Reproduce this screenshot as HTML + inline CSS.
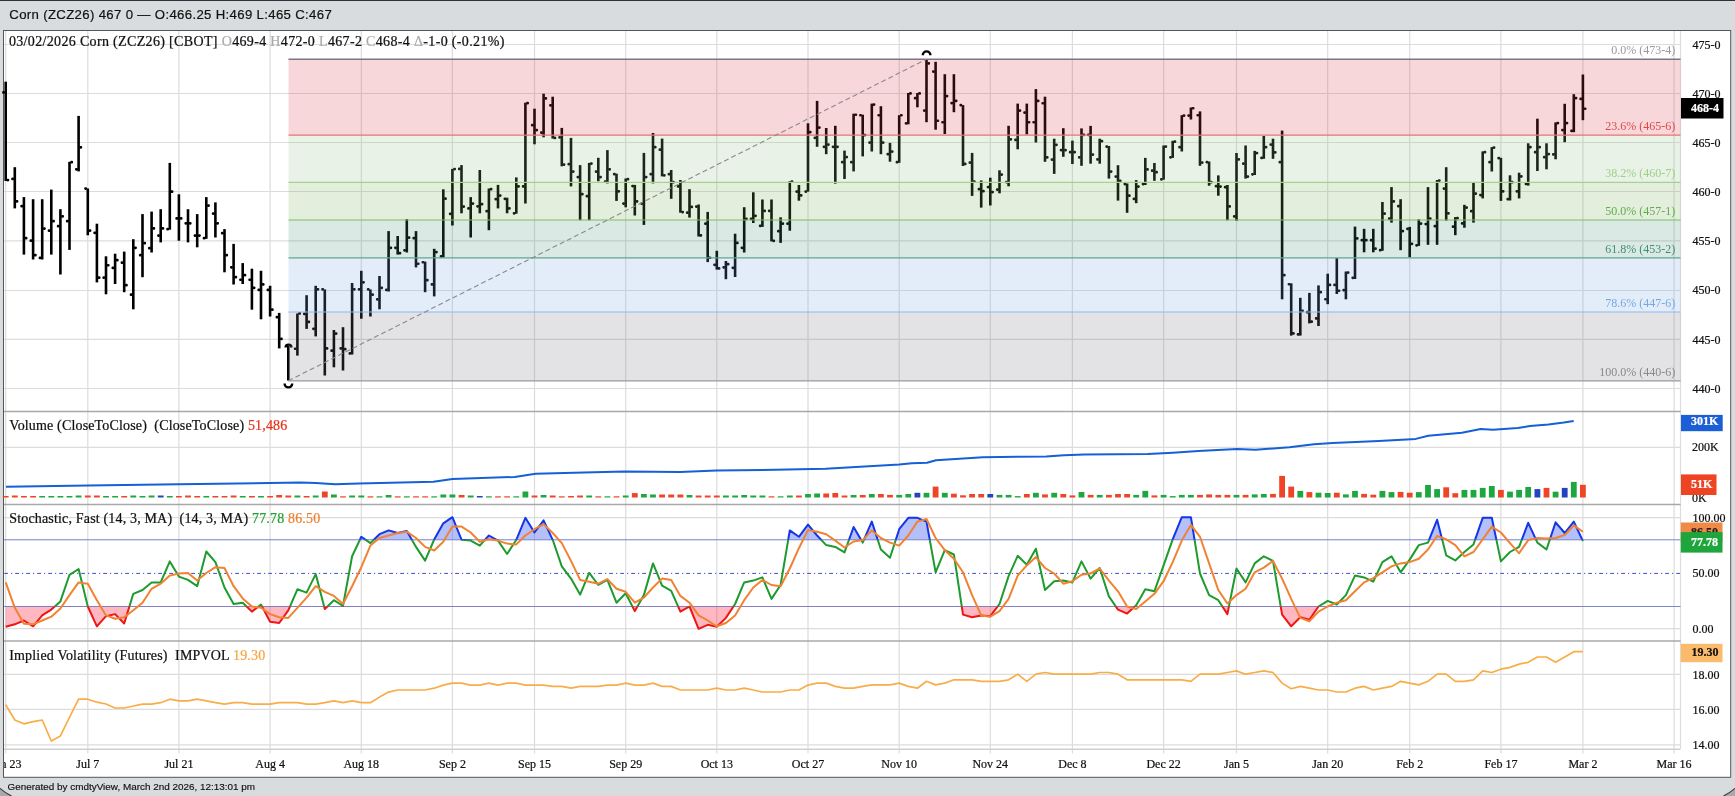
<!DOCTYPE html><html><head><meta charset="utf-8"><style>
html,body{margin:0;padding:0;background:#d9dcdf;}
svg{display:block;will-change:transform;}
.sans{font-family:"Liberation Sans",sans-serif;}
.serif{font-family:"Liberation Serif",serif;}
</style></head><body>
<svg width="1735" height="796" viewBox="0 0 1735 796">
<defs>
<clipPath id="plot"><rect x="4" y="31" width="1676.5" height="718"/></clipPath>
<clipPath id="kup"><rect x="0" y="504" width="1681" height="35.8"/></clipPath>
<clipPath id="kdn"><rect x="0" y="606.5" width="1681" height="35"/></clipPath>
<clipPath id="kmid"><rect x="0" y="539.8" width="1681" height="66.7"/></clipPath>
<clipPath id="frame"><rect x="4" y="31" width="1726.5" height="746"/></clipPath>
</defs>
<rect x="0" y="0" width="1735" height="796" fill="#d9dcdf"/>
<rect x="0" y="0" width="1735" height="1" fill="#2e3238"/>
<text x="9.3" y="18.6" class="sans" font-size="13.2" fill="#111" stroke="#111" stroke-width="0.2" textLength="322.5" lengthAdjust="spacing">Corn (ZCZ26) 467 0 — O:466.25 H:469 L:465 C:467</text>
<rect x="3.5" y="30.5" width="1727.2" height="746.8" fill="#fff" stroke="#555" stroke-width="1"/>
<g stroke="#dcdcdc" stroke-width="1.2">
<line x1="5.7" y1="31" x2="5.7" y2="753.6"/>
<line x1="87.8" y1="31" x2="87.8" y2="753.6"/>
<line x1="178.9" y1="31" x2="178.9" y2="753.6"/>
<line x1="270.1" y1="31" x2="270.1" y2="753.6"/>
<line x1="361.3" y1="31" x2="361.3" y2="753.6"/>
<line x1="452.4" y1="31" x2="452.4" y2="753.6"/>
<line x1="534.5" y1="31" x2="534.5" y2="753.6"/>
<line x1="625.7" y1="31" x2="625.7" y2="753.6"/>
<line x1="716.8" y1="31" x2="716.8" y2="753.6"/>
<line x1="808" y1="31" x2="808" y2="753.6"/>
<line x1="899.2" y1="31" x2="899.2" y2="753.6"/>
<line x1="990.3" y1="31" x2="990.3" y2="753.6"/>
<line x1="1072.4" y1="31" x2="1072.4" y2="753.6"/>
<line x1="1163.6" y1="31" x2="1163.6" y2="753.6"/>
<line x1="1236.5" y1="31" x2="1236.5" y2="753.6"/>
<line x1="1327.7" y1="31" x2="1327.7" y2="753.6"/>
<line x1="1409.7" y1="31" x2="1409.7" y2="753.6"/>
<line x1="1500.9" y1="31" x2="1500.9" y2="753.6"/>
<line x1="1582.9" y1="31" x2="1582.9" y2="753.6"/>
<line x1="1674.1" y1="31" x2="1674.1" y2="753.6"/>
<line x1="1680.5" y1="31" x2="1680.5" y2="749"/>
<line x1="4" y1="44.5" x2="1680.5" y2="44.5"/>
<line x1="4" y1="93.5" x2="1680.5" y2="93.5"/>
<line x1="4" y1="142.5" x2="1680.5" y2="142.5"/>
<line x1="4" y1="191.5" x2="1680.5" y2="191.5"/>
<line x1="4" y1="240.8" x2="1680.5" y2="240.8"/>
<line x1="4" y1="290.5" x2="1680.5" y2="290.5"/>
<line x1="4" y1="339.3" x2="1680.5" y2="339.3"/>
<line x1="4" y1="388.5" x2="1680.5" y2="388.5"/>
<line x1="4" y1="447.3" x2="1680.5" y2="447.3"/>
<line x1="4" y1="517.6" x2="1680.5" y2="517.6"/>
<line x1="4" y1="628.6" x2="1680.5" y2="628.6"/>
<line x1="4" y1="674.4" x2="1680.5" y2="674.4"/>
<line x1="4" y1="709.4" x2="1680.5" y2="709.4"/>
<line x1="4" y1="744.8" x2="1680.5" y2="744.8"/>
</g>
<g stroke="#a8a8a8" stroke-width="1.5">
<line x1="4" y1="411.4" x2="1680.5" y2="411.4"/>
<line x1="4" y1="504.4" x2="1680.5" y2="504.4"/>
<line x1="4" y1="641.0" x2="1680.5" y2="641.0"/>
</g>
<line x1="4" y1="749.2" x2="1680.5" y2="749.2" stroke="#cfcfcf" stroke-width="1.5"/>
<g fill="#000">
<rect x="4.4" y="81.7" width="2.6" height="99.3"/>
<rect x="2.1" y="91.1" width="2.9" height="2.7" rx="1.1"/>
<rect x="6.4" y="178.7" width="2.9" height="2.7" rx="1.1"/>
<rect x="13.5" y="167.2" width="2.6" height="41.2"/>
<rect x="11.2" y="177.6" width="2.9" height="2.7" rx="1.1"/>
<rect x="15.5" y="200" width="2.9" height="2.7" rx="1.1"/>
<rect x="22.6" y="197.1" width="2.6" height="57.5"/>
<rect x="20.3" y="204.8" width="2.9" height="2.7" rx="1.1"/>
<rect x="24.6" y="236.8" width="2.9" height="2.7" rx="1.1"/>
<rect x="31.8" y="199.2" width="2.6" height="60.3"/>
<rect x="29.5" y="239.3" width="2.9" height="2.7" rx="1.1"/>
<rect x="33.8" y="253.8" width="2.9" height="2.7" rx="1.1"/>
<rect x="40.9" y="199.2" width="2.6" height="60.3"/>
<rect x="38.6" y="256.6" width="2.9" height="2.7" rx="1.1"/>
<rect x="42.9" y="227.2" width="2.9" height="2.7" rx="1.1"/>
<rect x="50" y="189.6" width="2.6" height="65"/>
<rect x="47.7" y="229.3" width="2.9" height="2.7" rx="1.1"/>
<rect x="52" y="219.8" width="2.9" height="2.7" rx="1.1"/>
<rect x="59.1" y="209.2" width="2.6" height="65.3"/>
<rect x="56.8" y="224.8" width="2.9" height="2.7" rx="1.1"/>
<rect x="61.1" y="215" width="2.9" height="2.7" rx="1.1"/>
<rect x="68.2" y="161.8" width="2.6" height="88.1"/>
<rect x="65.9" y="219.8" width="2.9" height="2.7" rx="1.1"/>
<rect x="70.2" y="160.8" width="2.9" height="2.7" rx="1.1"/>
<rect x="77.3" y="115.9" width="2.6" height="55.5"/>
<rect x="75" y="168" width="2.9" height="2.7" rx="1.1"/>
<rect x="79.3" y="146" width="2.9" height="2.7" rx="1.1"/>
<rect x="86.5" y="188.5" width="2.6" height="46.8"/>
<rect x="84.2" y="187.2" width="2.9" height="2.7" rx="1.1"/>
<rect x="88.5" y="229.2" width="2.9" height="2.7" rx="1.1"/>
<rect x="95.6" y="223.7" width="2.6" height="58.7"/>
<rect x="93.3" y="231.5" width="2.9" height="2.7" rx="1.1"/>
<rect x="97.6" y="276.3" width="2.9" height="2.7" rx="1.1"/>
<rect x="104.7" y="256.3" width="2.6" height="38"/>
<rect x="102.4" y="276.3" width="2.9" height="2.7" rx="1.1"/>
<rect x="106.7" y="263.9" width="2.9" height="2.7" rx="1.1"/>
<rect x="113.8" y="253.7" width="2.6" height="30.3"/>
<rect x="111.5" y="266.6" width="2.9" height="2.7" rx="1.1"/>
<rect x="115.8" y="258.8" width="2.9" height="2.7" rx="1.1"/>
<rect x="122.9" y="251.6" width="2.6" height="40.6"/>
<rect x="120.6" y="261.3" width="2.9" height="2.7" rx="1.1"/>
<rect x="124.9" y="283.8" width="2.9" height="2.7" rx="1.1"/>
<rect x="132" y="239.2" width="2.6" height="70.1"/>
<rect x="129.7" y="293.3" width="2.9" height="2.7" rx="1.1"/>
<rect x="134" y="246.5" width="2.9" height="2.7" rx="1.1"/>
<rect x="141.2" y="214.1" width="2.6" height="63.1"/>
<rect x="138.9" y="253.8" width="2.9" height="2.7" rx="1.1"/>
<rect x="143.2" y="241.8" width="2.9" height="2.7" rx="1.1"/>
<rect x="150.3" y="211.6" width="2.6" height="40.9"/>
<rect x="148" y="246.8" width="2.9" height="2.7" rx="1.1"/>
<rect x="152.3" y="227.1" width="2.9" height="2.7" rx="1.1"/>
<rect x="159.4" y="209.2" width="2.6" height="33.2"/>
<rect x="157.1" y="234.2" width="2.9" height="2.7" rx="1.1"/>
<rect x="161.4" y="227.1" width="2.9" height="2.7" rx="1.1"/>
<rect x="168.5" y="162.9" width="2.6" height="66.8"/>
<rect x="166.2" y="227.8" width="2.9" height="2.7" rx="1.1"/>
<rect x="170.5" y="190.3" width="2.9" height="2.7" rx="1.1"/>
<rect x="177.6" y="194.3" width="2.6" height="46.4"/>
<rect x="175.3" y="217.1" width="2.9" height="2.7" rx="1.1"/>
<rect x="179.6" y="217.1" width="2.9" height="2.7" rx="1.1"/>
<rect x="186.7" y="209.2" width="2.6" height="33.2"/>
<rect x="184.4" y="222" width="2.9" height="2.7" rx="1.1"/>
<rect x="188.7" y="222" width="2.9" height="2.7" rx="1.1"/>
<rect x="195.9" y="214.1" width="2.6" height="33.2"/>
<rect x="193.6" y="234.2" width="2.9" height="2.7" rx="1.1"/>
<rect x="197.9" y="234.2" width="2.9" height="2.7" rx="1.1"/>
<rect x="205" y="197.1" width="2.6" height="41.7"/>
<rect x="202.7" y="236.8" width="2.9" height="2.7" rx="1.1"/>
<rect x="207" y="204.2" width="2.9" height="2.7" rx="1.1"/>
<rect x="214.1" y="202.4" width="2.6" height="35.1"/>
<rect x="211.8" y="212.2" width="2.9" height="2.7" rx="1.1"/>
<rect x="216.1" y="222" width="2.9" height="2.7" rx="1.1"/>
<rect x="223.2" y="229.1" width="2.6" height="43.2"/>
<rect x="220.9" y="231.8" width="2.9" height="2.7" rx="1.1"/>
<rect x="225.2" y="253.8" width="2.9" height="2.7" rx="1.1"/>
<rect x="232.3" y="243.9" width="2.6" height="40.6"/>
<rect x="230" y="266" width="2.9" height="2.7" rx="1.1"/>
<rect x="234.3" y="275.8" width="2.9" height="2.7" rx="1.1"/>
<rect x="241.4" y="263.1" width="2.6" height="20.9"/>
<rect x="239.1" y="278.4" width="2.9" height="2.7" rx="1.1"/>
<rect x="243.4" y="273.8" width="2.9" height="2.7" rx="1.1"/>
<rect x="250.6" y="268.7" width="2.6" height="41"/>
<rect x="248.3" y="278.4" width="2.9" height="2.7" rx="1.1"/>
<rect x="252.6" y="286.5" width="2.9" height="2.7" rx="1.1"/>
<rect x="259.7" y="270.8" width="2.6" height="48.5"/>
<rect x="257.4" y="288.6" width="2.9" height="2.7" rx="1.1"/>
<rect x="261.7" y="283.1" width="2.9" height="2.7" rx="1.1"/>
<rect x="268.8" y="285.8" width="2.6" height="30.7"/>
<rect x="266.5" y="288.6" width="2.9" height="2.7" rx="1.1"/>
<rect x="270.8" y="308.3" width="2.9" height="2.7" rx="1.1"/>
<rect x="277.9" y="312.9" width="2.6" height="35.5"/>
<rect x="275.6" y="315.8" width="2.9" height="2.7" rx="1.1"/>
<rect x="279.9" y="337.6" width="2.9" height="2.7" rx="1.1"/>
<rect x="287" y="346" width="2.6" height="34.5"/>
<rect x="296.1" y="313.5" width="2.6" height="42.1"/>
<rect x="293.8" y="347.4" width="2.9" height="2.7" rx="1.1"/>
<rect x="298.1" y="312.1" width="2.9" height="2.7" rx="1.1"/>
<rect x="305.3" y="295.2" width="2.6" height="33.7"/>
<rect x="303" y="312.6" width="2.9" height="2.7" rx="1.1"/>
<rect x="307.3" y="320.6" width="2.9" height="2.7" rx="1.1"/>
<rect x="314.4" y="285.8" width="2.6" height="50.6"/>
<rect x="312.1" y="327.5" width="2.9" height="2.7" rx="1.1"/>
<rect x="316.4" y="288" width="2.9" height="2.7" rx="1.1"/>
<rect x="323.5" y="289.4" width="2.6" height="86.1"/>
<rect x="321.2" y="288" width="2.9" height="2.7" rx="1.1"/>
<rect x="325.5" y="347.1" width="2.9" height="2.7" rx="1.1"/>
<rect x="332.6" y="330" width="2.6" height="37.3"/>
<rect x="330.3" y="349.3" width="2.9" height="2.7" rx="1.1"/>
<rect x="334.6" y="332.2" width="2.9" height="2.7" rx="1.1"/>
<rect x="341.7" y="327.2" width="2.6" height="43.3"/>
<rect x="339.4" y="347.1" width="2.9" height="2.7" rx="1.1"/>
<rect x="343.7" y="347.8" width="2.9" height="2.7" rx="1.1"/>
<rect x="350.8" y="283" width="2.6" height="71.5"/>
<rect x="348.5" y="352.1" width="2.9" height="2.7" rx="1.1"/>
<rect x="352.8" y="288" width="2.9" height="2.7" rx="1.1"/>
<rect x="360" y="270.8" width="2.6" height="47.9"/>
<rect x="357.7" y="288" width="2.9" height="2.7" rx="1.1"/>
<rect x="362" y="281" width="2.9" height="2.7" rx="1.1"/>
<rect x="369.1" y="289.4" width="2.6" height="27.1"/>
<rect x="366.8" y="288" width="2.9" height="2.7" rx="1.1"/>
<rect x="371.1" y="293.3" width="2.9" height="2.7" rx="1.1"/>
<rect x="378.2" y="276" width="2.6" height="33.3"/>
<rect x="375.9" y="298" width="2.9" height="2.7" rx="1.1"/>
<rect x="380.2" y="286.5" width="2.9" height="2.7" rx="1.1"/>
<rect x="387.3" y="231.1" width="2.6" height="60.4"/>
<rect x="385" y="288.6" width="2.9" height="2.7" rx="1.1"/>
<rect x="389.3" y="246.5" width="2.9" height="2.7" rx="1.1"/>
<rect x="396.4" y="236" width="2.6" height="18.6"/>
<rect x="394.1" y="246.5" width="2.9" height="2.7" rx="1.1"/>
<rect x="398.4" y="251.8" width="2.9" height="2.7" rx="1.1"/>
<rect x="405.5" y="219.1" width="2.6" height="33.4"/>
<rect x="403.2" y="249" width="2.9" height="2.7" rx="1.1"/>
<rect x="407.5" y="236.2" width="2.9" height="2.7" rx="1.1"/>
<rect x="414.7" y="231.1" width="2.6" height="36.3"/>
<rect x="412.4" y="236.8" width="2.9" height="2.7" rx="1.1"/>
<rect x="416.7" y="262.4" width="2.9" height="2.7" rx="1.1"/>
<rect x="423.8" y="261.6" width="2.6" height="30.6"/>
<rect x="421.5" y="260.9" width="2.9" height="2.7" rx="1.1"/>
<rect x="425.8" y="278.8" width="2.9" height="2.7" rx="1.1"/>
<rect x="432.9" y="248.8" width="2.6" height="47.6"/>
<rect x="430.6" y="283.1" width="2.9" height="2.7" rx="1.1"/>
<rect x="434.9" y="250.7" width="2.9" height="2.7" rx="1.1"/>
<rect x="442" y="189.3" width="2.6" height="68.1"/>
<rect x="439.7" y="255" width="2.9" height="2.7" rx="1.1"/>
<rect x="444" y="197.3" width="2.9" height="2.7" rx="1.1"/>
<rect x="451.1" y="168.9" width="2.6" height="56.6"/>
<rect x="448.8" y="212.5" width="2.9" height="2.7" rx="1.1"/>
<rect x="453.1" y="167.7" width="2.9" height="2.7" rx="1.1"/>
<rect x="460.2" y="165.1" width="2.6" height="48.2"/>
<rect x="457.9" y="167.6" width="2.9" height="2.7" rx="1.1"/>
<rect x="462.2" y="205.2" width="2.9" height="2.7" rx="1.1"/>
<rect x="469.4" y="197.1" width="2.6" height="40.4"/>
<rect x="467.1" y="207.1" width="2.9" height="2.7" rx="1.1"/>
<rect x="471.4" y="202.2" width="2.9" height="2.7" rx="1.1"/>
<rect x="478.5" y="170" width="2.6" height="43.3"/>
<rect x="476.2" y="205" width="2.9" height="2.7" rx="1.1"/>
<rect x="480.5" y="202.8" width="2.9" height="2.7" rx="1.1"/>
<rect x="487.6" y="188.5" width="2.6" height="41.7"/>
<rect x="485.3" y="209.8" width="2.9" height="2.7" rx="1.1"/>
<rect x="489.6" y="187.8" width="2.9" height="2.7" rx="1.1"/>
<rect x="496.7" y="184.9" width="2.6" height="23.5"/>
<rect x="494.4" y="197.8" width="2.9" height="2.7" rx="1.1"/>
<rect x="498.7" y="194.2" width="2.9" height="2.7" rx="1.1"/>
<rect x="505.8" y="197.7" width="2.6" height="15.6"/>
<rect x="503.5" y="197.5" width="2.9" height="2.7" rx="1.1"/>
<rect x="507.8" y="207.1" width="2.9" height="2.7" rx="1.1"/>
<rect x="515" y="177.4" width="2.6" height="36.3"/>
<rect x="512.7" y="212" width="2.9" height="2.7" rx="1.1"/>
<rect x="517" y="185.1" width="2.9" height="2.7" rx="1.1"/>
<rect x="524.1" y="102.7" width="2.6" height="100.8"/>
<rect x="521.8" y="185.1" width="2.9" height="2.7" rx="1.1"/>
<rect x="526.1" y="101.8" width="2.9" height="2.7" rx="1.1"/>
<rect x="533.2" y="108.7" width="2.6" height="35.6"/>
<rect x="530.9" y="123.8" width="2.9" height="2.7" rx="1.1"/>
<rect x="535.2" y="128.7" width="2.9" height="2.7" rx="1.1"/>
<rect x="542.3" y="93.7" width="2.6" height="43.6"/>
<rect x="540" y="131.2" width="2.9" height="2.7" rx="1.1"/>
<rect x="544.3" y="97.1" width="2.9" height="2.7" rx="1.1"/>
<rect x="551.4" y="96.7" width="2.6" height="41.9"/>
<rect x="549.1" y="104" width="2.9" height="2.7" rx="1.1"/>
<rect x="553.4" y="136.6" width="2.9" height="2.7" rx="1.1"/>
<rect x="560.5" y="127.9" width="2.6" height="38.4"/>
<rect x="558.2" y="136" width="2.9" height="2.7" rx="1.1"/>
<rect x="562.5" y="163.2" width="2.9" height="2.7" rx="1.1"/>
<rect x="569.7" y="137.9" width="2.6" height="48.5"/>
<rect x="567.4" y="162.8" width="2.9" height="2.7" rx="1.1"/>
<rect x="571.7" y="170.2" width="2.9" height="2.7" rx="1.1"/>
<rect x="578.8" y="165.1" width="2.6" height="55.1"/>
<rect x="576.5" y="175.7" width="2.9" height="2.7" rx="1.1"/>
<rect x="580.8" y="192.8" width="2.9" height="2.7" rx="1.1"/>
<rect x="587.9" y="162.9" width="2.6" height="57.3"/>
<rect x="585.6" y="194.8" width="2.9" height="2.7" rx="1.1"/>
<rect x="589.9" y="162.2" width="2.9" height="2.7" rx="1.1"/>
<rect x="597" y="157.8" width="2.6" height="23.5"/>
<rect x="594.7" y="170.2" width="2.9" height="2.7" rx="1.1"/>
<rect x="599" y="175.7" width="2.9" height="2.7" rx="1.1"/>
<rect x="606.1" y="150.1" width="2.6" height="33.3"/>
<rect x="603.8" y="180.3" width="2.9" height="2.7" rx="1.1"/>
<rect x="608.1" y="168" width="2.9" height="2.7" rx="1.1"/>
<rect x="615.2" y="173.6" width="2.6" height="27.3"/>
<rect x="612.9" y="172.8" width="2.9" height="2.7" rx="1.1"/>
<rect x="617.2" y="190" width="2.9" height="2.7" rx="1.1"/>
<rect x="624.4" y="178.5" width="2.6" height="28.8"/>
<rect x="622.1" y="202.2" width="2.9" height="2.7" rx="1.1"/>
<rect x="626.4" y="177.8" width="2.9" height="2.7" rx="1.1"/>
<rect x="633.5" y="184.9" width="2.6" height="30.6"/>
<rect x="631.2" y="184.7" width="2.9" height="2.7" rx="1.1"/>
<rect x="635.5" y="200.1" width="2.9" height="2.7" rx="1.1"/>
<rect x="642.6" y="152.9" width="2.6" height="72"/>
<rect x="640.3" y="202.2" width="2.9" height="2.7" rx="1.1"/>
<rect x="644.6" y="175.7" width="2.9" height="2.7" rx="1.1"/>
<rect x="651.7" y="133" width="2.6" height="50.4"/>
<rect x="649.4" y="172.8" width="2.9" height="2.7" rx="1.1"/>
<rect x="653.7" y="145.8" width="2.9" height="2.7" rx="1.1"/>
<rect x="660.8" y="138.6" width="2.6" height="37.8"/>
<rect x="658.5" y="148.3" width="2.9" height="2.7" rx="1.1"/>
<rect x="662.8" y="174" width="2.9" height="2.7" rx="1.1"/>
<rect x="669.9" y="170" width="2.6" height="28.8"/>
<rect x="667.6" y="172.8" width="2.9" height="2.7" rx="1.1"/>
<rect x="671.9" y="180.8" width="2.9" height="2.7" rx="1.1"/>
<rect x="679.1" y="180" width="2.6" height="32.7"/>
<rect x="676.8" y="185.1" width="2.9" height="2.7" rx="1.1"/>
<rect x="681.1" y="210.7" width="2.9" height="2.7" rx="1.1"/>
<rect x="688.2" y="189.2" width="2.6" height="28.4"/>
<rect x="685.9" y="211.3" width="2.9" height="2.7" rx="1.1"/>
<rect x="690.2" y="205.6" width="2.9" height="2.7" rx="1.1"/>
<rect x="697.3" y="204.5" width="2.6" height="32"/>
<rect x="695" y="205.2" width="2.9" height="2.7" rx="1.1"/>
<rect x="699.3" y="234.1" width="2.9" height="2.7" rx="1.1"/>
<rect x="706.4" y="211.9" width="2.6" height="50.2"/>
<rect x="704.1" y="222.3" width="2.9" height="2.7" rx="1.1"/>
<rect x="708.4" y="256.4" width="2.9" height="2.7" rx="1.1"/>
<rect x="715.5" y="250.8" width="2.6" height="18.8"/>
<rect x="713.2" y="263.5" width="2.9" height="2.7" rx="1.1"/>
<rect x="717.5" y="267.1" width="2.9" height="2.7" rx="1.1"/>
<rect x="724.6" y="261" width="2.6" height="18.2"/>
<rect x="722.3" y="266" width="2.9" height="2.7" rx="1.1"/>
<rect x="726.6" y="262.8" width="2.9" height="2.7" rx="1.1"/>
<rect x="733.8" y="233.7" width="2.6" height="43.3"/>
<rect x="731.5" y="266.5" width="2.9" height="2.7" rx="1.1"/>
<rect x="735.8" y="241.6" width="2.9" height="2.7" rx="1.1"/>
<rect x="742.9" y="207.2" width="2.6" height="45.3"/>
<rect x="740.6" y="246.5" width="2.9" height="2.7" rx="1.1"/>
<rect x="744.9" y="217.5" width="2.9" height="2.7" rx="1.1"/>
<rect x="752" y="192.3" width="2.6" height="30.7"/>
<rect x="749.7" y="217.5" width="2.9" height="2.7" rx="1.1"/>
<rect x="754" y="214.5" width="2.9" height="2.7" rx="1.1"/>
<rect x="761.1" y="199.5" width="2.6" height="27.4"/>
<rect x="758.8" y="224.5" width="2.9" height="2.7" rx="1.1"/>
<rect x="763.1" y="209.6" width="2.9" height="2.7" rx="1.1"/>
<rect x="770.2" y="199.5" width="2.6" height="41.9"/>
<rect x="767.9" y="209.6" width="2.9" height="2.7" rx="1.1"/>
<rect x="772.2" y="239.5" width="2.9" height="2.7" rx="1.1"/>
<rect x="779.3" y="217.3" width="2.6" height="25.6"/>
<rect x="777" y="229.8" width="2.9" height="2.7" rx="1.1"/>
<rect x="781.3" y="222.3" width="2.9" height="2.7" rx="1.1"/>
<rect x="788.5" y="181.2" width="2.6" height="49.5"/>
<rect x="786.2" y="222.3" width="2.9" height="2.7" rx="1.1"/>
<rect x="790.5" y="180.3" width="2.9" height="2.7" rx="1.1"/>
<rect x="797.6" y="185" width="2.6" height="15.7"/>
<rect x="795.3" y="190.2" width="2.9" height="2.7" rx="1.1"/>
<rect x="799.6" y="194.1" width="2.9" height="2.7" rx="1.1"/>
<rect x="806.7" y="123.3" width="2.6" height="68.3"/>
<rect x="804.4" y="190.2" width="2.9" height="2.7" rx="1.1"/>
<rect x="808.7" y="130.8" width="2.9" height="2.7" rx="1.1"/>
<rect x="815.8" y="100.9" width="2.6" height="45.9"/>
<rect x="813.5" y="136.5" width="2.9" height="2.7" rx="1.1"/>
<rect x="817.8" y="126.2" width="2.9" height="2.7" rx="1.1"/>
<rect x="824.9" y="128" width="2.6" height="26.2"/>
<rect x="822.6" y="145.5" width="2.9" height="2.7" rx="1.1"/>
<rect x="826.9" y="143.2" width="2.9" height="2.7" rx="1.1"/>
<rect x="834" y="125.8" width="2.6" height="57.8"/>
<rect x="831.7" y="145.5" width="2.9" height="2.7" rx="1.1"/>
<rect x="836" y="145.5" width="2.9" height="2.7" rx="1.1"/>
<rect x="843.2" y="150.6" width="2.6" height="28.4"/>
<rect x="840.9" y="160.8" width="2.9" height="2.7" rx="1.1"/>
<rect x="845.2" y="155.7" width="2.9" height="2.7" rx="1.1"/>
<rect x="852.3" y="113.7" width="2.6" height="57.7"/>
<rect x="850" y="160.8" width="2.9" height="2.7" rx="1.1"/>
<rect x="854.3" y="113.4" width="2.9" height="2.7" rx="1.1"/>
<rect x="861.4" y="114.7" width="2.6" height="41.7"/>
<rect x="859.1" y="113.9" width="2.9" height="2.7" rx="1.1"/>
<rect x="863.4" y="133.7" width="2.9" height="2.7" rx="1.1"/>
<rect x="870.5" y="103.6" width="2.6" height="47.9"/>
<rect x="868.2" y="141.2" width="2.9" height="2.7" rx="1.1"/>
<rect x="872.5" y="103.2" width="2.9" height="2.7" rx="1.1"/>
<rect x="879.6" y="106.2" width="2.6" height="48"/>
<rect x="877.3" y="113.9" width="2.9" height="2.7" rx="1.1"/>
<rect x="881.6" y="141.2" width="2.9" height="2.7" rx="1.1"/>
<rect x="888.7" y="142.9" width="2.6" height="18.8"/>
<rect x="886.4" y="152.8" width="2.9" height="2.7" rx="1.1"/>
<rect x="890.7" y="150.2" width="2.9" height="2.7" rx="1.1"/>
<rect x="897.9" y="115.2" width="2.6" height="47.6"/>
<rect x="895.6" y="160.8" width="2.9" height="2.7" rx="1.1"/>
<rect x="899.9" y="113.9" width="2.9" height="2.7" rx="1.1"/>
<rect x="907" y="93" width="2.6" height="31.3"/>
<rect x="904.7" y="122" width="2.9" height="2.7" rx="1.1"/>
<rect x="909" y="92.1" width="2.9" height="2.7" rx="1.1"/>
<rect x="916.1" y="93" width="2.6" height="14.3"/>
<rect x="913.8" y="96.8" width="2.9" height="2.7" rx="1.1"/>
<rect x="918.1" y="92.1" width="2.9" height="2.7" rx="1.1"/>
<rect x="925.2" y="59.2" width="2.6" height="63"/>
<rect x="922.9" y="109.2" width="2.9" height="2.7" rx="1.1"/>
<rect x="927.2" y="62.1" width="2.9" height="2.7" rx="1.1"/>
<rect x="934.3" y="61.8" width="2.6" height="67.9"/>
<rect x="932" y="70.2" width="2.9" height="2.7" rx="1.1"/>
<rect x="936.3" y="119.4" width="2.9" height="2.7" rx="1.1"/>
<rect x="943.5" y="74.2" width="2.6" height="59.8"/>
<rect x="941.2" y="120.9" width="2.9" height="2.7" rx="1.1"/>
<rect x="945.5" y="94.7" width="2.9" height="2.7" rx="1.1"/>
<rect x="952.6" y="74.2" width="2.6" height="38"/>
<rect x="950.3" y="101.7" width="2.9" height="2.7" rx="1.1"/>
<rect x="954.6" y="99.6" width="2.9" height="2.7" rx="1.1"/>
<rect x="961.7" y="105.1" width="2.6" height="60.9"/>
<rect x="959.4" y="103.8" width="2.9" height="2.7" rx="1.1"/>
<rect x="963.7" y="162.6" width="2.9" height="2.7" rx="1.1"/>
<rect x="970.8" y="152.9" width="2.6" height="43"/>
<rect x="968.5" y="161.2" width="2.9" height="2.7" rx="1.1"/>
<rect x="972.8" y="180.3" width="2.9" height="2.7" rx="1.1"/>
<rect x="979.9" y="180.4" width="2.6" height="27.2"/>
<rect x="977.6" y="187.8" width="2.9" height="2.7" rx="1.1"/>
<rect x="981.9" y="189.8" width="2.9" height="2.7" rx="1.1"/>
<rect x="989" y="177.7" width="2.6" height="27.8"/>
<rect x="986.7" y="185.7" width="2.9" height="2.7" rx="1.1"/>
<rect x="991" y="190.7" width="2.9" height="2.7" rx="1.1"/>
<rect x="998.2" y="170.3" width="2.6" height="23"/>
<rect x="995.9" y="188.2" width="2.9" height="2.7" rx="1.1"/>
<rect x="1000.2" y="173.2" width="2.9" height="2.7" rx="1.1"/>
<rect x="1007.3" y="125.8" width="2.6" height="60.5"/>
<rect x="1005" y="180.7" width="2.9" height="2.7" rx="1.1"/>
<rect x="1009.3" y="138" width="2.9" height="2.7" rx="1.1"/>
<rect x="1016.4" y="103.6" width="2.6" height="45.7"/>
<rect x="1014.1" y="138.6" width="2.9" height="2.7" rx="1.1"/>
<rect x="1018.4" y="109.2" width="2.9" height="2.7" rx="1.1"/>
<rect x="1025.5" y="103.6" width="2.6" height="30.8"/>
<rect x="1023.2" y="111.2" width="2.9" height="2.7" rx="1.1"/>
<rect x="1027.5" y="120.9" width="2.9" height="2.7" rx="1.1"/>
<rect x="1034.6" y="89.1" width="2.6" height="53.4"/>
<rect x="1032.3" y="120.9" width="2.9" height="2.7" rx="1.1"/>
<rect x="1036.6" y="99.6" width="2.9" height="2.7" rx="1.1"/>
<rect x="1043.7" y="96.7" width="2.6" height="65.1"/>
<rect x="1041.4" y="101.9" width="2.9" height="2.7" rx="1.1"/>
<rect x="1045.7" y="156.1" width="2.9" height="2.7" rx="1.1"/>
<rect x="1052.9" y="138.7" width="2.6" height="35.2"/>
<rect x="1050.6" y="158.2" width="2.9" height="2.7" rx="1.1"/>
<rect x="1054.9" y="143.5" width="2.9" height="2.7" rx="1.1"/>
<rect x="1062" y="128.2" width="2.6" height="28.6"/>
<rect x="1059.7" y="148.7" width="2.9" height="2.7" rx="1.1"/>
<rect x="1064" y="148.8" width="2.9" height="2.7" rx="1.1"/>
<rect x="1071.1" y="140.6" width="2.6" height="23.4"/>
<rect x="1068.8" y="150.8" width="2.9" height="2.7" rx="1.1"/>
<rect x="1073.1" y="150.8" width="2.9" height="2.7" rx="1.1"/>
<rect x="1080.2" y="128.4" width="2.6" height="37.4"/>
<rect x="1077.9" y="156" width="2.9" height="2.7" rx="1.1"/>
<rect x="1082.2" y="133.5" width="2.9" height="2.7" rx="1.1"/>
<rect x="1089.3" y="125.9" width="2.6" height="37.8"/>
<rect x="1087" y="133.5" width="2.9" height="2.7" rx="1.1"/>
<rect x="1091.3" y="153.2" width="2.9" height="2.7" rx="1.1"/>
<rect x="1098.4" y="138.7" width="2.6" height="25"/>
<rect x="1096.1" y="158.1" width="2.9" height="2.7" rx="1.1"/>
<rect x="1100.4" y="139.8" width="2.9" height="2.7" rx="1.1"/>
<rect x="1107.6" y="146" width="2.6" height="32.6"/>
<rect x="1105.3" y="145.2" width="2.9" height="2.7" rx="1.1"/>
<rect x="1109.6" y="170.2" width="2.9" height="2.7" rx="1.1"/>
<rect x="1116.7" y="165.2" width="2.6" height="35.4"/>
<rect x="1114.4" y="175.2" width="2.9" height="2.7" rx="1.1"/>
<rect x="1118.7" y="179.5" width="2.9" height="2.7" rx="1.1"/>
<rect x="1125.8" y="183.5" width="2.6" height="29.3"/>
<rect x="1123.5" y="182.7" width="2.9" height="2.7" rx="1.1"/>
<rect x="1127.8" y="194.3" width="2.9" height="2.7" rx="1.1"/>
<rect x="1134.9" y="180.1" width="2.6" height="23.1"/>
<rect x="1132.6" y="197.6" width="2.9" height="2.7" rx="1.1"/>
<rect x="1136.9" y="185.2" width="2.9" height="2.7" rx="1.1"/>
<rect x="1144" y="157.9" width="2.6" height="27.1"/>
<rect x="1141.7" y="182.7" width="2.9" height="2.7" rx="1.1"/>
<rect x="1146" y="168.1" width="2.9" height="2.7" rx="1.1"/>
<rect x="1153.1" y="163" width="2.6" height="17.8"/>
<rect x="1150.8" y="169.3" width="2.9" height="2.7" rx="1.1"/>
<rect x="1155.1" y="170.8" width="2.9" height="2.7" rx="1.1"/>
<rect x="1162.3" y="145.5" width="2.6" height="34.2"/>
<rect x="1160" y="178" width="2.9" height="2.7" rx="1.1"/>
<rect x="1164.3" y="145.2" width="2.9" height="2.7" rx="1.1"/>
<rect x="1171.4" y="140.8" width="2.6" height="17.1"/>
<rect x="1169.1" y="156" width="2.9" height="2.7" rx="1.1"/>
<rect x="1173.4" y="140.3" width="2.9" height="2.7" rx="1.1"/>
<rect x="1180.5" y="115.2" width="2.6" height="36.3"/>
<rect x="1178.2" y="145.8" width="2.9" height="2.7" rx="1.1"/>
<rect x="1182.5" y="114.2" width="2.9" height="2.7" rx="1.1"/>
<rect x="1189.6" y="107.5" width="2.6" height="12"/>
<rect x="1187.3" y="114.2" width="2.9" height="2.7" rx="1.1"/>
<rect x="1191.6" y="106.9" width="2.9" height="2.7" rx="1.1"/>
<rect x="1198.7" y="111.4" width="2.6" height="54.4"/>
<rect x="1196.4" y="113.9" width="2.9" height="2.7" rx="1.1"/>
<rect x="1200.7" y="161.2" width="2.9" height="2.7" rx="1.1"/>
<rect x="1207.8" y="161.5" width="2.6" height="24.2"/>
<rect x="1205.5" y="160.8" width="2.9" height="2.7" rx="1.1"/>
<rect x="1209.8" y="180.8" width="2.9" height="2.7" rx="1.1"/>
<rect x="1217" y="175.4" width="2.6" height="20.3"/>
<rect x="1214.7" y="184.8" width="2.9" height="2.7" rx="1.1"/>
<rect x="1219" y="185.2" width="2.9" height="2.7" rx="1.1"/>
<rect x="1226.1" y="185" width="2.6" height="35.3"/>
<rect x="1223.8" y="185.8" width="2.9" height="2.7" rx="1.1"/>
<rect x="1228.1" y="205.1" width="2.9" height="2.7" rx="1.1"/>
<rect x="1235.2" y="153" width="2.6" height="67.7"/>
<rect x="1232.9" y="215.1" width="2.9" height="2.7" rx="1.1"/>
<rect x="1237.2" y="158.1" width="2.9" height="2.7" rx="1.1"/>
<rect x="1244.3" y="145.5" width="2.6" height="33.1"/>
<rect x="1242" y="162.3" width="2.9" height="2.7" rx="1.1"/>
<rect x="1246.3" y="175.2" width="2.9" height="2.7" rx="1.1"/>
<rect x="1253.4" y="150.9" width="2.6" height="24.1"/>
<rect x="1251.1" y="173" width="2.9" height="2.7" rx="1.1"/>
<rect x="1255.4" y="151.7" width="2.9" height="2.7" rx="1.1"/>
<rect x="1262.5" y="135.9" width="2.6" height="22.9"/>
<rect x="1260.2" y="156.6" width="2.9" height="2.7" rx="1.1"/>
<rect x="1264.5" y="145.8" width="2.9" height="2.7" rx="1.1"/>
<rect x="1271.7" y="138.7" width="2.6" height="20.1"/>
<rect x="1269.4" y="143.2" width="2.9" height="2.7" rx="1.1"/>
<rect x="1273.7" y="151.1" width="2.9" height="2.7" rx="1.1"/>
<rect x="1280.8" y="130.6" width="2.6" height="168.7"/>
<rect x="1278.5" y="160.8" width="2.9" height="2.7" rx="1.1"/>
<rect x="1282.8" y="273.8" width="2.9" height="2.7" rx="1.1"/>
<rect x="1289.9" y="283.3" width="2.6" height="52.3"/>
<rect x="1287.6" y="282.9" width="2.9" height="2.7" rx="1.1"/>
<rect x="1291.9" y="332.1" width="2.9" height="2.7" rx="1.1"/>
<rect x="1299" y="297.8" width="2.6" height="37.8"/>
<rect x="1296.7" y="333.1" width="2.9" height="2.7" rx="1.1"/>
<rect x="1301" y="309.6" width="2.9" height="2.7" rx="1.1"/>
<rect x="1308.1" y="292.9" width="2.6" height="30.5"/>
<rect x="1305.8" y="310.8" width="2.9" height="2.7" rx="1.1"/>
<rect x="1310.1" y="320.3" width="2.9" height="2.7" rx="1.1"/>
<rect x="1317.2" y="285.4" width="2.6" height="40.6"/>
<rect x="1314.9" y="317.1" width="2.9" height="2.7" rx="1.1"/>
<rect x="1319.2" y="290.8" width="2.9" height="2.7" rx="1.1"/>
<rect x="1326.4" y="273.7" width="2.6" height="30.5"/>
<rect x="1324.1" y="297.9" width="2.9" height="2.7" rx="1.1"/>
<rect x="1328.4" y="283.6" width="2.9" height="2.7" rx="1.1"/>
<rect x="1335.5" y="258.1" width="2.6" height="35.9"/>
<rect x="1333.2" y="283.6" width="2.9" height="2.7" rx="1.1"/>
<rect x="1337.5" y="289.4" width="2.9" height="2.7" rx="1.1"/>
<rect x="1344.6" y="271.5" width="2.6" height="27.8"/>
<rect x="1342.3" y="288.8" width="2.9" height="2.7" rx="1.1"/>
<rect x="1346.6" y="271.2" width="2.9" height="2.7" rx="1.1"/>
<rect x="1353.7" y="226.6" width="2.6" height="52.4"/>
<rect x="1351.4" y="276.5" width="2.9" height="2.7" rx="1.1"/>
<rect x="1355.7" y="237.1" width="2.9" height="2.7" rx="1.1"/>
<rect x="1362.8" y="228.8" width="2.6" height="23.5"/>
<rect x="1360.5" y="238.8" width="2.9" height="2.7" rx="1.1"/>
<rect x="1364.8" y="238.8" width="2.9" height="2.7" rx="1.1"/>
<rect x="1372" y="228.8" width="2.6" height="23.5"/>
<rect x="1369.7" y="238.8" width="2.9" height="2.7" rx="1.1"/>
<rect x="1374" y="247.3" width="2.9" height="2.7" rx="1.1"/>
<rect x="1381.1" y="202" width="2.6" height="48.8"/>
<rect x="1378.8" y="248.8" width="2.9" height="2.7" rx="1.1"/>
<rect x="1383.1" y="212.2" width="2.9" height="2.7" rx="1.1"/>
<rect x="1390.2" y="187.1" width="2.6" height="35.5"/>
<rect x="1387.9" y="217.2" width="2.9" height="2.7" rx="1.1"/>
<rect x="1392.2" y="200.1" width="2.9" height="2.7" rx="1.1"/>
<rect x="1399.3" y="199.2" width="2.6" height="51"/>
<rect x="1397" y="204.8" width="2.9" height="2.7" rx="1.1"/>
<rect x="1401.3" y="229.7" width="2.9" height="2.7" rx="1.1"/>
<rect x="1408.4" y="226.9" width="2.6" height="30.3"/>
<rect x="1406.1" y="227.5" width="2.9" height="2.7" rx="1.1"/>
<rect x="1410.4" y="242.5" width="2.9" height="2.7" rx="1.1"/>
<rect x="1417.5" y="219.3" width="2.6" height="26.6"/>
<rect x="1415.2" y="244" width="2.9" height="2.7" rx="1.1"/>
<rect x="1419.5" y="222.2" width="2.9" height="2.7" rx="1.1"/>
<rect x="1426.7" y="187.1" width="2.6" height="57.7"/>
<rect x="1424.4" y="222.7" width="2.9" height="2.7" rx="1.1"/>
<rect x="1428.7" y="217.2" width="2.9" height="2.7" rx="1.1"/>
<rect x="1435.8" y="180" width="2.6" height="64.8"/>
<rect x="1433.5" y="224.8" width="2.9" height="2.7" rx="1.1"/>
<rect x="1437.8" y="179.2" width="2.9" height="2.7" rx="1.1"/>
<rect x="1444.9" y="167.2" width="2.6" height="53.4"/>
<rect x="1442.6" y="187.2" width="2.9" height="2.7" rx="1.1"/>
<rect x="1446.9" y="212" width="2.9" height="2.7" rx="1.1"/>
<rect x="1454" y="217.1" width="2.6" height="18.1"/>
<rect x="1451.7" y="225.3" width="2.9" height="2.7" rx="1.1"/>
<rect x="1456" y="216.8" width="2.9" height="2.7" rx="1.1"/>
<rect x="1463.1" y="204.8" width="2.6" height="22.9"/>
<rect x="1460.8" y="222.1" width="2.9" height="2.7" rx="1.1"/>
<rect x="1465.1" y="206.2" width="2.9" height="2.7" rx="1.1"/>
<rect x="1472.2" y="182.8" width="2.6" height="39.8"/>
<rect x="1469.9" y="209.8" width="2.9" height="2.7" rx="1.1"/>
<rect x="1474.2" y="192.2" width="2.9" height="2.7" rx="1.1"/>
<rect x="1481.4" y="151.4" width="2.6" height="47"/>
<rect x="1479.1" y="193.7" width="2.9" height="2.7" rx="1.1"/>
<rect x="1483.4" y="150.8" width="2.9" height="2.7" rx="1.1"/>
<rect x="1490.5" y="147.1" width="2.6" height="24.4"/>
<rect x="1488.2" y="160.8" width="2.9" height="2.7" rx="1.1"/>
<rect x="1492.5" y="146.2" width="2.9" height="2.7" rx="1.1"/>
<rect x="1499.6" y="157.8" width="2.6" height="43.1"/>
<rect x="1497.3" y="156.8" width="2.9" height="2.7" rx="1.1"/>
<rect x="1501.6" y="190" width="2.9" height="2.7" rx="1.1"/>
<rect x="1508.7" y="175.3" width="2.6" height="25.2"/>
<rect x="1506.4" y="197.8" width="2.9" height="2.7" rx="1.1"/>
<rect x="1510.7" y="180.8" width="2.9" height="2.7" rx="1.1"/>
<rect x="1517.8" y="172.7" width="2.6" height="25.7"/>
<rect x="1515.5" y="190" width="2.9" height="2.7" rx="1.1"/>
<rect x="1519.8" y="175.1" width="2.9" height="2.7" rx="1.1"/>
<rect x="1526.9" y="143.3" width="2.6" height="42.3"/>
<rect x="1524.6" y="182.6" width="2.9" height="2.7" rx="1.1"/>
<rect x="1528.9" y="145.8" width="2.9" height="2.7" rx="1.1"/>
<rect x="1536.1" y="118.7" width="2.6" height="52.3"/>
<rect x="1533.8" y="150.8" width="2.9" height="2.7" rx="1.1"/>
<rect x="1538.1" y="145.8" width="2.9" height="2.7" rx="1.1"/>
<rect x="1545.2" y="143.3" width="2.6" height="26"/>
<rect x="1542.9" y="155.8" width="2.9" height="2.7" rx="1.1"/>
<rect x="1547.2" y="152.7" width="2.9" height="2.7" rx="1.1"/>
<rect x="1554.3" y="122.4" width="2.6" height="36.9"/>
<rect x="1552" y="153.1" width="2.9" height="2.7" rx="1.1"/>
<rect x="1556.3" y="121.7" width="2.9" height="2.7" rx="1.1"/>
<rect x="1563.4" y="103.8" width="2.6" height="38.4"/>
<rect x="1561.1" y="128.7" width="2.9" height="2.7" rx="1.1"/>
<rect x="1565.4" y="121.7" width="2.9" height="2.7" rx="1.1"/>
<rect x="1572.5" y="94.2" width="2.6" height="38"/>
<rect x="1570.2" y="129.6" width="2.9" height="2.7" rx="1.1"/>
<rect x="1574.5" y="96.7" width="2.9" height="2.7" rx="1.1"/>
<rect x="1581.6" y="74.5" width="2.6" height="45.7"/>
<rect x="1579.3" y="97.6" width="2.9" height="2.7" rx="1.1"/>
<rect x="1583.6" y="107.4" width="2.9" height="2.7" rx="1.1"/>
</g>
<g fill="none" stroke="#000" stroke-width="2.4">
<path d="M922.8,55.2 A3.8,3.8 0 0 1 930.4,55.2"/>
<path d="M284.6,383.6 A3.8,3.8 0 0 0 292.2,383.6"/>
<path d="M285.6,347.5 A2.9,2.9 0 0 1 291.4,347.5"/>
</g>
<rect x="288.5" y="59.2" width="1392.0" height="75.8" fill="rgba(220,55,70,0.2)"/>
<rect x="288.5" y="135.0" width="1392.0" height="47.4" fill="rgba(145,190,135,0.2)"/>
<rect x="288.5" y="182.4" width="1392.0" height="37.6" fill="rgba(115,170,85,0.2)"/>
<rect x="288.5" y="220.0" width="1392.0" height="37.8" fill="rgba(75,145,120,0.2)"/>
<rect x="288.5" y="257.8" width="1392.0" height="54.2" fill="rgba(110,165,225,0.2)"/>
<rect x="288.5" y="312.0" width="1392.0" height="68.8" fill="rgba(115,115,125,0.2)"/>
<line x1="288.5" y1="59.3" x2="1680.5" y2="59.3" stroke="#7f7386" stroke-width="1.6"/>
<text x="1675.2" y="53.9" text-anchor="end" class="serif" font-size="12" fill="#999" stroke="none">0.0% (473-4)</text>
<line x1="288.5" y1="135.2" x2="1680.5" y2="135.2" stroke="#e57373" stroke-width="1.2"/>
<text x="1675.2" y="129.7" text-anchor="end" class="serif" font-size="12" fill="#e04848" stroke="none">23.6% (465-6)</text>
<line x1="288.5" y1="182.4" x2="1680.5" y2="182.4" stroke="#a9d18e" stroke-width="1.2"/>
<text x="1675.2" y="177.1" text-anchor="end" class="serif" font-size="12" fill="#9fcf85" stroke="none">38.2% (460-7)</text>
<line x1="288.5" y1="220.0" x2="1680.5" y2="220.0" stroke="#79bf68" stroke-width="1.2"/>
<text x="1675.2" y="214.7" text-anchor="end" class="serif" font-size="12" fill="#5fae4a" stroke="none">50.0% (457-1)</text>
<line x1="288.5" y1="257.8" x2="1680.5" y2="257.8" stroke="#5fa88a" stroke-width="1.2"/>
<text x="1675.2" y="252.5" text-anchor="end" class="serif" font-size="12" fill="#3f8f70" stroke="none">61.8% (453-2)</text>
<line x1="288.5" y1="312.0" x2="1680.5" y2="312.0" stroke="#8cb8ec" stroke-width="1.2"/>
<text x="1675.2" y="306.7" text-anchor="end" class="serif" font-size="12" fill="#78a8e0" stroke="none">78.6% (447-6)</text>
<line x1="288.5" y1="380.8" x2="1680.5" y2="380.8" stroke="#9a9a9a" stroke-width="1.2"/>
<text x="1675.2" y="375.5" text-anchor="end" class="serif" font-size="12" fill="#888" stroke="none">100.0% (440-6)</text>
<line x1="288.3" y1="380.8" x2="926.5" y2="59.2" stroke="#8a8a8a" stroke-width="1.1" stroke-dasharray="5 3"/>
<text x="8.9" y="46.3" class="serif" font-size="14" fill="#111" textLength="495.5" lengthAdjust="spacing" stroke="#111" stroke-width="0.22">03/02/2026 Corn (ZCZ26) [CBOT] <tspan fill="#aaa" stroke="#aaa" stroke-width="0.22">O</tspan>469-4 <tspan fill="#aaa" stroke="#aaa" stroke-width="0.22">H</tspan>472-0 <tspan fill="#aaa" stroke="#aaa" stroke-width="0.22">L</tspan>467-2 <tspan fill="#aaa" stroke="#aaa" stroke-width="0.22">C</tspan>468-4 <tspan fill="#aaa" stroke="#aaa" stroke-width="0.22">Δ</tspan>-1-0 (-0.21%)</text>
<rect x="2.8" y="496" width="5.8" height="1.5" fill="#ef4426"/>
<rect x="11.9" y="495.5" width="5.8" height="2" fill="#ef4426"/>
<rect x="21" y="496" width="5.8" height="1.5" fill="#ef4426"/>
<rect x="30.2" y="496" width="5.8" height="1.5" fill="#ef4426"/>
<rect x="39.3" y="496" width="5.8" height="1.5" fill="#1fa73f"/>
<rect x="48.4" y="496" width="5.8" height="1.5" fill="#1fa73f"/>
<rect x="57.5" y="496" width="5.8" height="1.5" fill="#1fa73f"/>
<rect x="66.6" y="496" width="5.8" height="1.5" fill="#1fa73f"/>
<rect x="75.7" y="495.5" width="5.8" height="2" fill="#1fa73f"/>
<rect x="84.9" y="495.5" width="5.8" height="2" fill="#ef4426"/>
<rect x="94" y="495.5" width="5.8" height="2" fill="#ef4426"/>
<rect x="103.1" y="496" width="5.8" height="1.5" fill="#1fa73f"/>
<rect x="112.2" y="496" width="5.8" height="1.5" fill="#1fa73f"/>
<rect x="121.3" y="496" width="5.8" height="1.5" fill="#ef4426"/>
<rect x="130.4" y="495.5" width="5.8" height="2" fill="#1fa73f"/>
<rect x="139.6" y="496" width="5.8" height="1.5" fill="#1fa73f"/>
<rect x="148.7" y="495.5" width="5.8" height="2" fill="#1fa73f"/>
<rect x="157.8" y="495.5" width="5.8" height="2" fill="#2444bf"/>
<rect x="166.9" y="496" width="5.8" height="1.5" fill="#1fa73f"/>
<rect x="176" y="496" width="5.8" height="1.5" fill="#ef4426"/>
<rect x="185.1" y="495.5" width="5.8" height="2" fill="#ef4426"/>
<rect x="194.3" y="496" width="5.8" height="1.5" fill="#ef4426"/>
<rect x="203.4" y="496" width="5.8" height="1.5" fill="#1fa73f"/>
<rect x="212.5" y="496" width="5.8" height="1.5" fill="#ef4426"/>
<rect x="221.6" y="496" width="5.8" height="1.5" fill="#ef4426"/>
<rect x="230.7" y="495.5" width="5.8" height="2" fill="#ef4426"/>
<rect x="239.8" y="496" width="5.8" height="1.5" fill="#1fa73f"/>
<rect x="249" y="496" width="5.8" height="1.5" fill="#ef4426"/>
<rect x="258.1" y="496" width="5.8" height="1.5" fill="#1fa73f"/>
<rect x="267.2" y="496" width="5.8" height="1.5" fill="#ef4426"/>
<rect x="276.3" y="495" width="5.8" height="2.5" fill="#ef4426"/>
<rect x="285.4" y="495.5" width="5.8" height="2" fill="#ef4426"/>
<rect x="294.5" y="495.5" width="5.8" height="2" fill="#1fa73f"/>
<rect x="303.7" y="496" width="5.8" height="1.5" fill="#ef4426"/>
<rect x="312.8" y="495.5" width="5.8" height="2" fill="#1fa73f"/>
<rect x="321.9" y="491.5" width="5.8" height="6" fill="#ef4426"/>
<rect x="331" y="494.5" width="5.8" height="3" fill="#1fa73f"/>
<rect x="340.1" y="496.3" width="5.8" height="1.2" fill="#ef4426"/>
<rect x="349.2" y="495.5" width="5.8" height="2" fill="#1fa73f"/>
<rect x="358.4" y="495.5" width="5.8" height="2" fill="#1fa73f"/>
<rect x="367.5" y="496.3" width="5.8" height="1.2" fill="#ef4426"/>
<rect x="376.6" y="496.3" width="5.8" height="1.2" fill="#1fa73f"/>
<rect x="385.7" y="495" width="5.8" height="2.5" fill="#1fa73f"/>
<rect x="394.8" y="496.3" width="5.8" height="1.2" fill="#ef4426"/>
<rect x="403.9" y="496.3" width="5.8" height="1.2" fill="#1fa73f"/>
<rect x="413.1" y="496.3" width="5.8" height="1.2" fill="#ef4426"/>
<rect x="422.2" y="496.3" width="5.8" height="1.2" fill="#ef4426"/>
<rect x="431.3" y="496.3" width="5.8" height="1.2" fill="#1fa73f"/>
<rect x="440.4" y="494.5" width="5.8" height="3" fill="#1fa73f"/>
<rect x="449.5" y="494.5" width="5.8" height="3" fill="#1fa73f"/>
<rect x="458.7" y="495" width="5.8" height="2.5" fill="#ef4426"/>
<rect x="467.8" y="495.5" width="5.8" height="2" fill="#1fa73f"/>
<rect x="476.9" y="496" width="5.8" height="1.5" fill="#2444bf"/>
<rect x="486" y="496.3" width="5.8" height="1.2" fill="#1fa73f"/>
<rect x="495.1" y="496.3" width="5.8" height="1.2" fill="#ef4426"/>
<rect x="504.2" y="496.3" width="5.8" height="1.2" fill="#ef4426"/>
<rect x="513.4" y="496.3" width="5.8" height="1.2" fill="#1fa73f"/>
<rect x="522.5" y="491.5" width="5.8" height="6" fill="#1fa73f"/>
<rect x="531.6" y="495.5" width="5.8" height="2" fill="#ef4426"/>
<rect x="540.7" y="495" width="5.8" height="2.5" fill="#1fa73f"/>
<rect x="549.8" y="495.5" width="5.8" height="2" fill="#ef4426"/>
<rect x="558.9" y="496.3" width="5.8" height="1.2" fill="#ef4426"/>
<rect x="568.1" y="496" width="5.8" height="1.5" fill="#ef4426"/>
<rect x="577.2" y="495.5" width="5.8" height="2" fill="#ef4426"/>
<rect x="586.3" y="495.5" width="5.8" height="2" fill="#1fa73f"/>
<rect x="595.4" y="496.3" width="5.8" height="1.2" fill="#ef4426"/>
<rect x="604.5" y="496.3" width="5.8" height="1.2" fill="#1fa73f"/>
<rect x="613.6" y="496.3" width="5.8" height="1.2" fill="#ef4426"/>
<rect x="622.8" y="495.5" width="5.8" height="2" fill="#1fa73f"/>
<rect x="631.9" y="493.1" width="5.8" height="4.4" fill="#ef4426"/>
<rect x="641" y="494" width="5.8" height="3.5" fill="#1fa73f"/>
<rect x="650.1" y="494.5" width="5.8" height="3" fill="#1fa73f"/>
<rect x="659.2" y="494.5" width="5.8" height="3" fill="#ef4426"/>
<rect x="668.3" y="494.5" width="5.8" height="3" fill="#ef4426"/>
<rect x="677.5" y="494.5" width="5.8" height="3" fill="#ef4426"/>
<rect x="686.6" y="495" width="5.8" height="2.5" fill="#1fa73f"/>
<rect x="695.7" y="495.5" width="5.8" height="2" fill="#ef4426"/>
<rect x="704.8" y="495.5" width="5.8" height="2" fill="#ef4426"/>
<rect x="713.9" y="495.5" width="5.8" height="2" fill="#ef4426"/>
<rect x="723" y="495.5" width="5.8" height="2" fill="#1fa73f"/>
<rect x="732.2" y="495.5" width="5.8" height="2" fill="#1fa73f"/>
<rect x="741.3" y="495" width="5.8" height="2.5" fill="#1fa73f"/>
<rect x="750.4" y="495.5" width="5.8" height="2" fill="#1fa73f"/>
<rect x="759.5" y="495.5" width="5.8" height="2" fill="#1fa73f"/>
<rect x="768.6" y="496.3" width="5.8" height="1.2" fill="#ef4426"/>
<rect x="777.7" y="496.3" width="5.8" height="1.2" fill="#1fa73f"/>
<rect x="786.9" y="495.5" width="5.8" height="2" fill="#1fa73f"/>
<rect x="796" y="495.5" width="5.8" height="2" fill="#ef4426"/>
<rect x="805.1" y="494" width="5.8" height="3.5" fill="#1fa73f"/>
<rect x="814.2" y="493.5" width="5.8" height="4" fill="#1fa73f"/>
<rect x="823.3" y="493.5" width="5.8" height="4" fill="#ef4426"/>
<rect x="832.4" y="493" width="5.8" height="4.5" fill="#ef4426"/>
<rect x="841.6" y="495.5" width="5.8" height="2" fill="#ef4426"/>
<rect x="850.7" y="495" width="5.8" height="2.5" fill="#1fa73f"/>
<rect x="859.8" y="495" width="5.8" height="2.5" fill="#ef4426"/>
<rect x="868.9" y="494" width="5.8" height="3.5" fill="#1fa73f"/>
<rect x="878" y="494" width="5.8" height="3.5" fill="#ef4426"/>
<rect x="887.1" y="494.9" width="5.8" height="2.6" fill="#ef4426"/>
<rect x="896.3" y="494.9" width="5.8" height="2.6" fill="#1fa73f"/>
<rect x="905.4" y="494" width="5.8" height="3.5" fill="#1fa73f"/>
<rect x="914.5" y="492.8" width="5.8" height="4.7" fill="#2444bf"/>
<rect x="923.6" y="492.8" width="5.8" height="4.7" fill="#1fa73f"/>
<rect x="932.7" y="486.6" width="5.8" height="10.9" fill="#ef4426"/>
<rect x="941.9" y="492.8" width="5.8" height="4.7" fill="#1fa73f"/>
<rect x="951" y="493.7" width="5.8" height="3.8" fill="#ef4426"/>
<rect x="960.1" y="495.3" width="5.8" height="2.2" fill="#ef4426"/>
<rect x="969.2" y="494" width="5.8" height="3.5" fill="#ef4426"/>
<rect x="978.3" y="494" width="5.8" height="3.5" fill="#ef4426"/>
<rect x="987.4" y="494" width="5.8" height="3.5" fill="#2444bf"/>
<rect x="996.6" y="494.9" width="5.8" height="2.6" fill="#1fa73f"/>
<rect x="1005.7" y="494.9" width="5.8" height="2.6" fill="#1fa73f"/>
<rect x="1014.8" y="496.1" width="5.8" height="1.4" fill="#1fa73f"/>
<rect x="1023.9" y="494" width="5.8" height="3.5" fill="#ef4426"/>
<rect x="1033" y="492.8" width="5.8" height="4.7" fill="#1fa73f"/>
<rect x="1042.1" y="494.4" width="5.8" height="3.1" fill="#ef4426"/>
<rect x="1051.3" y="492.8" width="5.8" height="4.7" fill="#1fa73f"/>
<rect x="1060.4" y="494" width="5.8" height="3.5" fill="#ef4426"/>
<rect x="1069.5" y="495.4" width="5.8" height="2.1" fill="#ef4426"/>
<rect x="1078.6" y="492" width="5.8" height="5.5" fill="#1fa73f"/>
<rect x="1087.7" y="494.9" width="5.8" height="2.6" fill="#ef4426"/>
<rect x="1096.8" y="494.9" width="5.8" height="2.6" fill="#1fa73f"/>
<rect x="1106" y="494.9" width="5.8" height="2.6" fill="#ef4426"/>
<rect x="1115.1" y="494" width="5.8" height="3.5" fill="#ef4426"/>
<rect x="1124.2" y="494" width="5.8" height="3.5" fill="#ef4426"/>
<rect x="1133.3" y="494.9" width="5.8" height="2.6" fill="#1fa73f"/>
<rect x="1142.4" y="490.9" width="5.8" height="6.6" fill="#1fa73f"/>
<rect x="1151.5" y="495.4" width="5.8" height="2.1" fill="#ef4426"/>
<rect x="1160.7" y="494.9" width="5.8" height="2.6" fill="#1fa73f"/>
<rect x="1169.8" y="496.1" width="5.8" height="1.4" fill="#1fa73f"/>
<rect x="1178.9" y="494.9" width="5.8" height="2.6" fill="#1fa73f"/>
<rect x="1188" y="494.9" width="5.8" height="2.6" fill="#1fa73f"/>
<rect x="1197.1" y="494.9" width="5.8" height="2.6" fill="#ef4426"/>
<rect x="1206.2" y="494.4" width="5.8" height="3.1" fill="#ef4426"/>
<rect x="1215.4" y="494.9" width="5.8" height="2.6" fill="#ef4426"/>
<rect x="1224.5" y="494.9" width="5.8" height="2.6" fill="#ef4426"/>
<rect x="1233.6" y="494.9" width="5.8" height="2.6" fill="#1fa73f"/>
<rect x="1242.7" y="494.9" width="5.8" height="2.6" fill="#ef4426"/>
<rect x="1251.8" y="494.4" width="5.8" height="3.1" fill="#1fa73f"/>
<rect x="1260.9" y="494" width="5.8" height="3.5" fill="#1fa73f"/>
<rect x="1270.1" y="493.9" width="5.8" height="3.6" fill="#ef4426"/>
<rect x="1279.2" y="475.9" width="5.8" height="21.6" fill="#ef4426"/>
<rect x="1288.3" y="486.6" width="5.8" height="10.9" fill="#ef4426"/>
<rect x="1297.4" y="490.9" width="5.8" height="6.6" fill="#1fa73f"/>
<rect x="1306.5" y="492.1" width="5.8" height="5.4" fill="#ef4426"/>
<rect x="1315.6" y="492.7" width="5.8" height="4.8" fill="#1fa73f"/>
<rect x="1324.8" y="493" width="5.8" height="4.5" fill="#1fa73f"/>
<rect x="1333.9" y="492.7" width="5.8" height="4.8" fill="#ef4426"/>
<rect x="1343" y="494.4" width="5.8" height="3.1" fill="#1fa73f"/>
<rect x="1352.1" y="490.9" width="5.8" height="6.6" fill="#1fa73f"/>
<rect x="1361.2" y="493.9" width="5.8" height="3.6" fill="#ef4426"/>
<rect x="1370.4" y="494.7" width="5.8" height="2.8" fill="#ef4426"/>
<rect x="1379.5" y="490.9" width="5.8" height="6.6" fill="#1fa73f"/>
<rect x="1388.6" y="492.1" width="5.8" height="5.4" fill="#1fa73f"/>
<rect x="1397.7" y="491.9" width="5.8" height="5.6" fill="#ef4426"/>
<rect x="1406.8" y="492.7" width="5.8" height="4.8" fill="#ef4426"/>
<rect x="1415.9" y="492.1" width="5.8" height="5.4" fill="#1fa73f"/>
<rect x="1425.1" y="485" width="5.8" height="12.5" fill="#1fa73f"/>
<rect x="1434.2" y="489.1" width="5.8" height="8.4" fill="#1fa73f"/>
<rect x="1443.3" y="487.3" width="5.8" height="10.2" fill="#ef4426"/>
<rect x="1452.4" y="493.2" width="5.8" height="4.3" fill="#ef4426"/>
<rect x="1461.5" y="489.9" width="5.8" height="7.6" fill="#1fa73f"/>
<rect x="1470.6" y="489.9" width="5.8" height="7.6" fill="#1fa73f"/>
<rect x="1479.8" y="487.9" width="5.8" height="9.6" fill="#1fa73f"/>
<rect x="1488.9" y="486" width="5.8" height="11.5" fill="#1fa73f"/>
<rect x="1498" y="489.9" width="5.8" height="7.6" fill="#ef4426"/>
<rect x="1507.1" y="491.6" width="5.8" height="5.9" fill="#1fa73f"/>
<rect x="1516.2" y="489.9" width="5.8" height="7.6" fill="#1fa73f"/>
<rect x="1525.3" y="487" width="5.8" height="10.5" fill="#1fa73f"/>
<rect x="1534.5" y="489.1" width="5.8" height="8.4" fill="#2444bf"/>
<rect x="1543.6" y="487.9" width="5.8" height="9.6" fill="#ef4426"/>
<rect x="1552.7" y="491.7" width="5.8" height="5.8" fill="#1fa73f"/>
<rect x="1561.8" y="487.9" width="5.8" height="9.6" fill="#2444bf"/>
<rect x="1570.9" y="481.9" width="5.8" height="15.6" fill="#1fa73f"/>
<rect x="1580" y="484.8" width="5.8" height="12.7" fill="#ef4426"/>
<polyline fill="none" stroke="#1560d6" stroke-width="2" stroke-linejoin="round" points="6,486.8 88,485.6 179,484.2 270,483 300,482.6 316,483 335,484.2 359,483.5 433.5,481.8 452.5,479 514.8,476.9 535.5,473.8 584,472.6 625,471.4 680,472 716.6,470.5 787.5,469.6 825.6,468.7 899.2,464.6 911.9,463.3 927,462.8 936,460.3 982.9,457.2 1046.3,456.5 1064,455.2 1084.3,454.5 1147.7,454 1173,452.7 1198.5,450.9 1237,449.1 1255.5,449.7 1289.4,447.2 1314,444.2 1332.6,442.9 1378.8,441.1 1415.8,438.9 1428.2,435.8 1462,432.8 1480.6,429 1493,429.7 1517.6,428.1 1530,426 1548.4,424.4 1563.9,422.6 1573.7,421"/>
<text x="9.2" y="429.8" class="serif" font-size="14" fill="#111" style="white-space:pre" textLength="278" lengthAdjust="spacing" stroke="#111" stroke-width="0.22">Volume (CloseToClose)  (CloseToClose) <tspan fill="#e8301c" stroke="#e8301c" stroke-width="0.22">51,486</tspan></text>
<g stroke-width="1">
<line x1="4" y1="539.8" x2="1680.5" y2="539.8" stroke="#7c86cc"/>
<line x1="4" y1="606.5" x2="1680.5" y2="606.5" stroke="#7c86cc"/>
<line x1="4" y1="573.4" x2="1680.5" y2="573.4" stroke="#3f4ec4" stroke-dasharray="3.8 3 1.2 3" stroke-dashoffset="-0.2"/>
</g>
<polygon clip-path="url(#kup)" fill="rgba(60,90,240,0.38)" points="5.7,539.8 5.7,626.8 14.8,624.3 23.9,620.5 33.1,626.3 42.2,615.4 51.3,609.6 60.4,601.4 69.5,574.8 78.6,569 87.8,606.5 96.9,626.3 106,616.2 115.1,614.1 124.2,623.5 133.3,593.8 142.5,590 151.6,582.4 160.7,582.4 169.8,561.4 178.9,576.6 188,579.9 197.2,586.2 206.3,551.5 215.4,562.1 224.5,587.5 233.6,604 242.7,602.7 251.9,611.6 261,604.5 270.1,621.7 279.2,623 288.3,610.3 297.4,589.3 306.6,592.6 315.7,574.1 324.8,609.1 333.9,600.2 343,606 352.1,556.3 361.3,536.8 370.4,543.1 379.5,534.2 388.6,530.4 397.7,533 406.8,530.9 416,546.9 425.1,560.6 434.2,539.5 443.3,523.3 452.4,517.2 461.6,539.8 470.7,540.6 479.8,545.6 488.9,535.5 498,540.6 507.1,554 516.3,539.8 525.4,517.8 534.5,532.5 543.6,520.3 552.7,539.8 561.8,566.4 571,578.6 580.1,594.6 589.2,572.8 598.3,585 607.4,579.9 616.5,602.7 625.7,593.3 634.8,611.1 643.9,595.1 653,563.4 662.1,585.7 671.2,590.8 680.4,611.6 689.5,606.5 698.6,628.8 707.7,624.8 716.8,626.8 725.9,617.9 735.1,604 744.2,582.4 753.3,580.6 762.4,577.4 771.5,598.9 780.6,585 789.8,530.4 798.9,536.8 808,524.6 817.1,535.5 826.2,545.1 835.3,546.9 844.5,552.4 853.6,527 862.7,542.6 871.8,521.6 880.9,549.5 890,557.8 899.2,529.2 908.3,517.8 917.4,517.8 926.5,521.6 935.6,572.3 944.8,550.2 953.9,554.5 963,614.6 972.1,617.2 981.2,615.4 990.3,616.2 999.5,604 1008.6,576.1 1017.7,555.8 1026.8,564.7 1035.9,548.7 1045,590 1054.2,581.2 1063.3,580.6 1072.4,582.4 1081.5,561.4 1090.6,578.6 1099.7,568 1108.9,596.4 1118,609.6 1127.1,613.6 1136.2,605.2 1145.3,589.3 1154.4,591.3 1163.6,565.4 1172.7,539.3 1181.8,517.2 1190.9,517.2 1200,573.5 1209.1,595.1 1218.3,600.2 1227.4,614.1 1236.5,568.5 1245.6,582.4 1254.7,563.4 1263.8,556.3 1273,560.9 1282.1,614.6 1291.2,626.3 1300.3,617.2 1309.4,619.7 1318.5,606.5 1327.7,600.9 1336.8,604.5 1345.9,595.1 1355,575.6 1364.1,577.4 1373.3,581.7 1382.4,562.1 1391.5,556.3 1400.6,572.3 1409.7,559.6 1418.8,545.1 1428,542.6 1437.1,519.8 1446.2,555.3 1455.3,560.4 1464.4,552 1473.5,544.4 1482.7,517.8 1491.8,517.8 1500.9,561.4 1510,552 1519.1,546.9 1528.2,522.8 1537.4,542.6 1546.5,549.5 1555.6,522.3 1564.7,533 1573.8,521.6 1582.9,541.1 1582.9,539.8"/>
<polygon clip-path="url(#kdn)" fill="rgba(255,40,70,0.33)" points="5.7,606.5 5.7,626.8 14.8,624.3 23.9,620.5 33.1,626.3 42.2,615.4 51.3,609.6 60.4,601.4 69.5,574.8 78.6,569 87.8,606.5 96.9,626.3 106,616.2 115.1,614.1 124.2,623.5 133.3,593.8 142.5,590 151.6,582.4 160.7,582.4 169.8,561.4 178.9,576.6 188,579.9 197.2,586.2 206.3,551.5 215.4,562.1 224.5,587.5 233.6,604 242.7,602.7 251.9,611.6 261,604.5 270.1,621.7 279.2,623 288.3,610.3 297.4,589.3 306.6,592.6 315.7,574.1 324.8,609.1 333.9,600.2 343,606 352.1,556.3 361.3,536.8 370.4,543.1 379.5,534.2 388.6,530.4 397.7,533 406.8,530.9 416,546.9 425.1,560.6 434.2,539.5 443.3,523.3 452.4,517.2 461.6,539.8 470.7,540.6 479.8,545.6 488.9,535.5 498,540.6 507.1,554 516.3,539.8 525.4,517.8 534.5,532.5 543.6,520.3 552.7,539.8 561.8,566.4 571,578.6 580.1,594.6 589.2,572.8 598.3,585 607.4,579.9 616.5,602.7 625.7,593.3 634.8,611.1 643.9,595.1 653,563.4 662.1,585.7 671.2,590.8 680.4,611.6 689.5,606.5 698.6,628.8 707.7,624.8 716.8,626.8 725.9,617.9 735.1,604 744.2,582.4 753.3,580.6 762.4,577.4 771.5,598.9 780.6,585 789.8,530.4 798.9,536.8 808,524.6 817.1,535.5 826.2,545.1 835.3,546.9 844.5,552.4 853.6,527 862.7,542.6 871.8,521.6 880.9,549.5 890,557.8 899.2,529.2 908.3,517.8 917.4,517.8 926.5,521.6 935.6,572.3 944.8,550.2 953.9,554.5 963,614.6 972.1,617.2 981.2,615.4 990.3,616.2 999.5,604 1008.6,576.1 1017.7,555.8 1026.8,564.7 1035.9,548.7 1045,590 1054.2,581.2 1063.3,580.6 1072.4,582.4 1081.5,561.4 1090.6,578.6 1099.7,568 1108.9,596.4 1118,609.6 1127.1,613.6 1136.2,605.2 1145.3,589.3 1154.4,591.3 1163.6,565.4 1172.7,539.3 1181.8,517.2 1190.9,517.2 1200,573.5 1209.1,595.1 1218.3,600.2 1227.4,614.1 1236.5,568.5 1245.6,582.4 1254.7,563.4 1263.8,556.3 1273,560.9 1282.1,614.6 1291.2,626.3 1300.3,617.2 1309.4,619.7 1318.5,606.5 1327.7,600.9 1336.8,604.5 1345.9,595.1 1355,575.6 1364.1,577.4 1373.3,581.7 1382.4,562.1 1391.5,556.3 1400.6,572.3 1409.7,559.6 1418.8,545.1 1428,542.6 1437.1,519.8 1446.2,555.3 1455.3,560.4 1464.4,552 1473.5,544.4 1482.7,517.8 1491.8,517.8 1500.9,561.4 1510,552 1519.1,546.9 1528.2,522.8 1537.4,542.6 1546.5,549.5 1555.6,522.3 1564.7,533 1573.8,521.6 1582.9,541.1 1582.9,606.5"/>
<polyline clip-path="url(#kmid)" fill="none" stroke="#1e9b2e" stroke-width="2" stroke-linejoin="round" points="5.7,626.8 14.8,624.3 23.9,620.5 33.1,626.3 42.2,615.4 51.3,609.6 60.4,601.4 69.5,574.8 78.6,569 87.8,606.5 96.9,626.3 106,616.2 115.1,614.1 124.2,623.5 133.3,593.8 142.5,590 151.6,582.4 160.7,582.4 169.8,561.4 178.9,576.6 188,579.9 197.2,586.2 206.3,551.5 215.4,562.1 224.5,587.5 233.6,604 242.7,602.7 251.9,611.6 261,604.5 270.1,621.7 279.2,623 288.3,610.3 297.4,589.3 306.6,592.6 315.7,574.1 324.8,609.1 333.9,600.2 343,606 352.1,556.3 361.3,536.8 370.4,543.1 379.5,534.2 388.6,530.4 397.7,533 406.8,530.9 416,546.9 425.1,560.6 434.2,539.5 443.3,523.3 452.4,517.2 461.6,539.8 470.7,540.6 479.8,545.6 488.9,535.5 498,540.6 507.1,554 516.3,539.8 525.4,517.8 534.5,532.5 543.6,520.3 552.7,539.8 561.8,566.4 571,578.6 580.1,594.6 589.2,572.8 598.3,585 607.4,579.9 616.5,602.7 625.7,593.3 634.8,611.1 643.9,595.1 653,563.4 662.1,585.7 671.2,590.8 680.4,611.6 689.5,606.5 698.6,628.8 707.7,624.8 716.8,626.8 725.9,617.9 735.1,604 744.2,582.4 753.3,580.6 762.4,577.4 771.5,598.9 780.6,585 789.8,530.4 798.9,536.8 808,524.6 817.1,535.5 826.2,545.1 835.3,546.9 844.5,552.4 853.6,527 862.7,542.6 871.8,521.6 880.9,549.5 890,557.8 899.2,529.2 908.3,517.8 917.4,517.8 926.5,521.6 935.6,572.3 944.8,550.2 953.9,554.5 963,614.6 972.1,617.2 981.2,615.4 990.3,616.2 999.5,604 1008.6,576.1 1017.7,555.8 1026.8,564.7 1035.9,548.7 1045,590 1054.2,581.2 1063.3,580.6 1072.4,582.4 1081.5,561.4 1090.6,578.6 1099.7,568 1108.9,596.4 1118,609.6 1127.1,613.6 1136.2,605.2 1145.3,589.3 1154.4,591.3 1163.6,565.4 1172.7,539.3 1181.8,517.2 1190.9,517.2 1200,573.5 1209.1,595.1 1218.3,600.2 1227.4,614.1 1236.5,568.5 1245.6,582.4 1254.7,563.4 1263.8,556.3 1273,560.9 1282.1,614.6 1291.2,626.3 1300.3,617.2 1309.4,619.7 1318.5,606.5 1327.7,600.9 1336.8,604.5 1345.9,595.1 1355,575.6 1364.1,577.4 1373.3,581.7 1382.4,562.1 1391.5,556.3 1400.6,572.3 1409.7,559.6 1418.8,545.1 1428,542.6 1437.1,519.8 1446.2,555.3 1455.3,560.4 1464.4,552 1473.5,544.4 1482.7,517.8 1491.8,517.8 1500.9,561.4 1510,552 1519.1,546.9 1528.2,522.8 1537.4,542.6 1546.5,549.5 1555.6,522.3 1564.7,533 1573.8,521.6 1582.9,541.1"/>
<polyline clip-path="url(#kup)" fill="none" stroke="#1535e8" stroke-width="2" stroke-linejoin="round" points="5.7,626.8 14.8,624.3 23.9,620.5 33.1,626.3 42.2,615.4 51.3,609.6 60.4,601.4 69.5,574.8 78.6,569 87.8,606.5 96.9,626.3 106,616.2 115.1,614.1 124.2,623.5 133.3,593.8 142.5,590 151.6,582.4 160.7,582.4 169.8,561.4 178.9,576.6 188,579.9 197.2,586.2 206.3,551.5 215.4,562.1 224.5,587.5 233.6,604 242.7,602.7 251.9,611.6 261,604.5 270.1,621.7 279.2,623 288.3,610.3 297.4,589.3 306.6,592.6 315.7,574.1 324.8,609.1 333.9,600.2 343,606 352.1,556.3 361.3,536.8 370.4,543.1 379.5,534.2 388.6,530.4 397.7,533 406.8,530.9 416,546.9 425.1,560.6 434.2,539.5 443.3,523.3 452.4,517.2 461.6,539.8 470.7,540.6 479.8,545.6 488.9,535.5 498,540.6 507.1,554 516.3,539.8 525.4,517.8 534.5,532.5 543.6,520.3 552.7,539.8 561.8,566.4 571,578.6 580.1,594.6 589.2,572.8 598.3,585 607.4,579.9 616.5,602.7 625.7,593.3 634.8,611.1 643.9,595.1 653,563.4 662.1,585.7 671.2,590.8 680.4,611.6 689.5,606.5 698.6,628.8 707.7,624.8 716.8,626.8 725.9,617.9 735.1,604 744.2,582.4 753.3,580.6 762.4,577.4 771.5,598.9 780.6,585 789.8,530.4 798.9,536.8 808,524.6 817.1,535.5 826.2,545.1 835.3,546.9 844.5,552.4 853.6,527 862.7,542.6 871.8,521.6 880.9,549.5 890,557.8 899.2,529.2 908.3,517.8 917.4,517.8 926.5,521.6 935.6,572.3 944.8,550.2 953.9,554.5 963,614.6 972.1,617.2 981.2,615.4 990.3,616.2 999.5,604 1008.6,576.1 1017.7,555.8 1026.8,564.7 1035.9,548.7 1045,590 1054.2,581.2 1063.3,580.6 1072.4,582.4 1081.5,561.4 1090.6,578.6 1099.7,568 1108.9,596.4 1118,609.6 1127.1,613.6 1136.2,605.2 1145.3,589.3 1154.4,591.3 1163.6,565.4 1172.7,539.3 1181.8,517.2 1190.9,517.2 1200,573.5 1209.1,595.1 1218.3,600.2 1227.4,614.1 1236.5,568.5 1245.6,582.4 1254.7,563.4 1263.8,556.3 1273,560.9 1282.1,614.6 1291.2,626.3 1300.3,617.2 1309.4,619.7 1318.5,606.5 1327.7,600.9 1336.8,604.5 1345.9,595.1 1355,575.6 1364.1,577.4 1373.3,581.7 1382.4,562.1 1391.5,556.3 1400.6,572.3 1409.7,559.6 1418.8,545.1 1428,542.6 1437.1,519.8 1446.2,555.3 1455.3,560.4 1464.4,552 1473.5,544.4 1482.7,517.8 1491.8,517.8 1500.9,561.4 1510,552 1519.1,546.9 1528.2,522.8 1537.4,542.6 1546.5,549.5 1555.6,522.3 1564.7,533 1573.8,521.6 1582.9,541.1"/>
<polyline clip-path="url(#kdn)" fill="none" stroke="#f01515" stroke-width="2" stroke-linejoin="round" points="5.7,626.8 14.8,624.3 23.9,620.5 33.1,626.3 42.2,615.4 51.3,609.6 60.4,601.4 69.5,574.8 78.6,569 87.8,606.5 96.9,626.3 106,616.2 115.1,614.1 124.2,623.5 133.3,593.8 142.5,590 151.6,582.4 160.7,582.4 169.8,561.4 178.9,576.6 188,579.9 197.2,586.2 206.3,551.5 215.4,562.1 224.5,587.5 233.6,604 242.7,602.7 251.9,611.6 261,604.5 270.1,621.7 279.2,623 288.3,610.3 297.4,589.3 306.6,592.6 315.7,574.1 324.8,609.1 333.9,600.2 343,606 352.1,556.3 361.3,536.8 370.4,543.1 379.5,534.2 388.6,530.4 397.7,533 406.8,530.9 416,546.9 425.1,560.6 434.2,539.5 443.3,523.3 452.4,517.2 461.6,539.8 470.7,540.6 479.8,545.6 488.9,535.5 498,540.6 507.1,554 516.3,539.8 525.4,517.8 534.5,532.5 543.6,520.3 552.7,539.8 561.8,566.4 571,578.6 580.1,594.6 589.2,572.8 598.3,585 607.4,579.9 616.5,602.7 625.7,593.3 634.8,611.1 643.9,595.1 653,563.4 662.1,585.7 671.2,590.8 680.4,611.6 689.5,606.5 698.6,628.8 707.7,624.8 716.8,626.8 725.9,617.9 735.1,604 744.2,582.4 753.3,580.6 762.4,577.4 771.5,598.9 780.6,585 789.8,530.4 798.9,536.8 808,524.6 817.1,535.5 826.2,545.1 835.3,546.9 844.5,552.4 853.6,527 862.7,542.6 871.8,521.6 880.9,549.5 890,557.8 899.2,529.2 908.3,517.8 917.4,517.8 926.5,521.6 935.6,572.3 944.8,550.2 953.9,554.5 963,614.6 972.1,617.2 981.2,615.4 990.3,616.2 999.5,604 1008.6,576.1 1017.7,555.8 1026.8,564.7 1035.9,548.7 1045,590 1054.2,581.2 1063.3,580.6 1072.4,582.4 1081.5,561.4 1090.6,578.6 1099.7,568 1108.9,596.4 1118,609.6 1127.1,613.6 1136.2,605.2 1145.3,589.3 1154.4,591.3 1163.6,565.4 1172.7,539.3 1181.8,517.2 1190.9,517.2 1200,573.5 1209.1,595.1 1218.3,600.2 1227.4,614.1 1236.5,568.5 1245.6,582.4 1254.7,563.4 1263.8,556.3 1273,560.9 1282.1,614.6 1291.2,626.3 1300.3,617.2 1309.4,619.7 1318.5,606.5 1327.7,600.9 1336.8,604.5 1345.9,595.1 1355,575.6 1364.1,577.4 1373.3,581.7 1382.4,562.1 1391.5,556.3 1400.6,572.3 1409.7,559.6 1418.8,545.1 1428,542.6 1437.1,519.8 1446.2,555.3 1455.3,560.4 1464.4,552 1473.5,544.4 1482.7,517.8 1491.8,517.8 1500.9,561.4 1510,552 1519.1,546.9 1528.2,522.8 1537.4,542.6 1546.5,549.5 1555.6,522.3 1564.7,533 1573.8,521.6 1582.9,541.1"/>
<polyline fill="none" stroke="#f08232" stroke-width="2" stroke-linejoin="round" points="5.7,582.4 14.8,607.8 23.9,623.8 33.1,624.3 42.2,620.5 51.3,616.7 60.4,608.5 69.5,595.1 78.6,582.4 87.8,583.7 96.9,600.2 106,615.4 115.1,618.7 124.2,617.2 133.3,610.3 142.5,602.7 151.6,588.8 160.7,583.7 169.8,575.6 178.9,573.5 188,573 197.2,580.6 206.3,573 215.4,567.2 224.5,568 233.6,586.2 242.7,598.4 251.9,606.5 261,607.8 270.1,614.1 279.2,617.2 288.3,617.9 297.4,607.8 306.6,597.6 315.7,586.2 324.8,591.8 333.9,595.9 343,604 352.1,586.2 361.3,567.2 370.4,545.6 379.5,538 388.6,535.5 397.7,533 406.8,531.7 416,538 425.1,546.9 434.2,550.5 443.3,541.8 452.4,526.6 461.6,526.6 470.7,532.5 479.8,541.8 488.9,539.3 498,540.6 507.1,543.6 516.3,544.4 525.4,535.5 534.5,529.2 543.6,524.1 552.7,533 561.8,543.1 571,560.9 580.1,579.9 589.2,581.7 598.3,583.7 607.4,579.1 616.5,588.8 625.7,591.8 634.8,602.7 643.9,597.6 653,587.5 662.1,578.6 671.2,579.9 680.4,595.9 689.5,602.7 698.6,615.4 707.7,620.5 716.8,626.3 725.9,623 735.1,615.4 744.2,600.2 753.3,587.5 762.4,579.9 771.5,585 780.6,586.2 789.8,568.5 798.9,548.2 808,529.9 817.1,531.7 826.2,534.2 835.3,540.6 844.5,547.5 853.6,541.5 862.7,540.1 871.8,530.4 880.9,538 890,542.6 899.2,545.6 908.3,535.5 917.4,521.6 926.5,519 935.6,538 944.8,550.2 953.9,558.8 963,572.3 972.1,595.1 981.2,615.4 990.3,616.7 999.5,611.1 1008.6,598.9 1017.7,575.6 1026.8,565.4 1035.9,557.1 1045,568 1054.2,573.5 1063.3,583.7 1072.4,581.2 1081.5,574.8 1090.6,573.5 1099.7,568.5 1108.9,580.6 1118,591.3 1127.1,606.5 1136.2,609.1 1145.3,601.4 1154.4,593.8 1163.6,581.2 1172.7,562.1 1181.8,540.6 1190.9,524.9 1200,536.8 1209.1,563.4 1218.3,590 1227.4,603.5 1236.5,595.1 1245.6,588.8 1254.7,572.3 1263.8,567.6 1273,560.9 1282.1,578.6 1291.2,598.9 1300.3,617.9 1309.4,621.2 1318.5,611.6 1327.7,606.5 1336.8,602.7 1345.9,600.2 1355,591.3 1364.1,582.4 1373.3,578.1 1382.4,572.3 1391.5,566.4 1400.6,563.4 1409.7,562.1 1418.8,558.8 1428,549.5 1437.1,536 1446.2,539.3 1455.3,545.1 1464.4,556.3 1473.5,552 1482.7,539.3 1491.8,526.6 1500.9,532.5 1510,543.1 1519.1,553.3 1528.2,540.1 1537.4,538 1546.5,538.5 1555.6,538 1564.7,535 1573.8,525.4 1582.9,531.7"/>
<text x="9.2" y="523.4" class="serif" font-size="14" fill="#111" style="white-space:pre" textLength="311" lengthAdjust="spacing" stroke="#111" stroke-width="0.22">Stochastic, Fast (14, 3, MA)  (14, 3, MA) <tspan fill="#22a033" stroke="#22a033" stroke-width="0.22">77.78</tspan> <tspan fill="#f08030" stroke="#f08030" stroke-width="0.22">86.50</tspan></text>
<polyline fill="none" stroke="#f9ad48" stroke-width="1.7" stroke-linejoin="round" points="5.7,704.7 14.8,720 23.9,723.8 33.1,721.7 42.2,720 51.3,741 60.4,735.9 69.5,717.4 78.6,699.2 87.8,699.2 96.9,702.2 106,704 115.1,708 124.2,708 133.3,706 142.5,704.2 151.6,704.2 160.7,702.7 169.8,699.2 178.9,700.9 188,700.9 197.2,699.2 206.3,700.9 215.4,702.7 224.5,704.2 233.6,702.7 242.7,702.7 251.9,704.2 261,704.2 270.1,704.2 279.2,702.7 288.3,702.7 297.4,702.7 306.6,704.2 315.7,704.2 324.8,702.7 333.9,700.9 343,702.7 352.1,700.9 361.3,702.7 370.4,702.7 379.5,697.1 388.6,692.1 397.7,690 406.8,690 416,690 425.1,690 434.2,688.2 443.3,685.1 452.4,683.1 461.6,683.1 470.7,685.1 479.8,685.1 488.9,683.1 498,685.1 507.1,683.1 516.3,683.1 525.4,685.1 534.5,685.1 543.6,685.1 552.7,686.4 561.8,686.4 571,688.2 580.1,686.4 589.2,686.4 598.3,686.4 607.4,685.1 616.5,685.1 625.7,683.1 634.8,685.1 643.9,685.1 653,683.1 662.1,686.4 671.2,686.4 680.4,690 689.5,690 698.6,690 707.7,690 716.8,688.2 725.9,690 735.1,690 744.2,688.2 753.3,690 762.4,692 771.5,692 780.6,692 789.8,690 798.9,690 808,685.1 817.1,683.1 826.2,683.1 835.3,686.4 844.5,688.2 853.6,688.2 862.7,686.4 871.8,684.9 880.9,684.9 890,684.9 899.2,683.1 908.3,686.4 917.4,688.2 926.5,681.3 935.6,684.9 944.8,683.1 953.9,679.8 963,679.8 972.1,679.8 981.2,681.3 990.3,681.3 999.5,681.3 1008.6,679.8 1017.7,674.2 1026.8,681.3 1035.9,674.2 1045,672.5 1054.2,674.2 1063.3,674.2 1072.4,674.2 1081.5,674.2 1090.6,674.2 1099.7,672.5 1108.9,672.5 1118,674.2 1127.1,679.8 1136.2,679.8 1145.3,679.8 1154.4,679.8 1163.6,679.8 1172.7,679.8 1181.8,679.8 1190.9,681.3 1200,674.2 1209.1,674.2 1218.3,674.2 1227.4,672.5 1236.5,670.9 1245.6,674.2 1254.7,672.5 1263.8,670.9 1273,672.5 1282.1,683.1 1291.2,688.7 1300.3,686.4 1309.4,688.2 1318.5,690 1327.7,690 1336.8,692 1345.9,692 1355,688.2 1364.1,686.4 1373.3,690 1382.4,688.2 1391.5,686.4 1400.6,681.3 1409.7,683.1 1418.8,684.9 1428,681.3 1437.1,674.2 1446.2,674.2 1455.3,681.3 1464.4,681.3 1473.5,679.8 1482.7,670.9 1491.8,672.5 1500.9,669.2 1510,667.4 1519.1,664.1 1528.2,662.3 1537.4,657 1546.5,657 1555.6,662.3 1564.7,657 1573.8,651.7 1582.9,651.7"/>
<text x="9.2" y="659.7" class="serif" font-size="14" fill="#111" style="white-space:pre" textLength="256" lengthAdjust="spacing" stroke="#111" stroke-width="0.22">Implied Volatility (Futures)  IMPVOL <tspan fill="#f5a742" stroke="#f5a742" stroke-width="0.22">19.30</tspan></text>
<g clip-path="url(#frame)">
<text x="5.7" y="768" text-anchor="middle" class="serif" font-size="12" fill="#111" stroke="#111" stroke-width="0.22">Jun 23</text>
<text x="87.8" y="768" text-anchor="middle" class="serif" font-size="12" fill="#111" stroke="#111" stroke-width="0.22">Jul 7</text>
<text x="178.9" y="768" text-anchor="middle" class="serif" font-size="12" fill="#111" stroke="#111" stroke-width="0.22">Jul 21</text>
<text x="270.1" y="768" text-anchor="middle" class="serif" font-size="12" fill="#111" stroke="#111" stroke-width="0.22">Aug 4</text>
<text x="361.3" y="768" text-anchor="middle" class="serif" font-size="12" fill="#111" stroke="#111" stroke-width="0.22">Aug 18</text>
<text x="452.4" y="768" text-anchor="middle" class="serif" font-size="12" fill="#111" stroke="#111" stroke-width="0.22">Sep 2</text>
<text x="534.5" y="768" text-anchor="middle" class="serif" font-size="12" fill="#111" stroke="#111" stroke-width="0.22">Sep 15</text>
<text x="625.7" y="768" text-anchor="middle" class="serif" font-size="12" fill="#111" stroke="#111" stroke-width="0.22">Sep 29</text>
<text x="716.8" y="768" text-anchor="middle" class="serif" font-size="12" fill="#111" stroke="#111" stroke-width="0.22">Oct 13</text>
<text x="808" y="768" text-anchor="middle" class="serif" font-size="12" fill="#111" stroke="#111" stroke-width="0.22">Oct 27</text>
<text x="899.2" y="768" text-anchor="middle" class="serif" font-size="12" fill="#111" stroke="#111" stroke-width="0.22">Nov 10</text>
<text x="990.3" y="768" text-anchor="middle" class="serif" font-size="12" fill="#111" stroke="#111" stroke-width="0.22">Nov 24</text>
<text x="1072.4" y="768" text-anchor="middle" class="serif" font-size="12" fill="#111" stroke="#111" stroke-width="0.22">Dec 8</text>
<text x="1163.6" y="768" text-anchor="middle" class="serif" font-size="12" fill="#111" stroke="#111" stroke-width="0.22">Dec 22</text>
<text x="1236.5" y="768" text-anchor="middle" class="serif" font-size="12" fill="#111" stroke="#111" stroke-width="0.22">Jan 5</text>
<text x="1327.7" y="768" text-anchor="middle" class="serif" font-size="12" fill="#111" stroke="#111" stroke-width="0.22">Jan 20</text>
<text x="1409.7" y="768" text-anchor="middle" class="serif" font-size="12" fill="#111" stroke="#111" stroke-width="0.22">Feb 2</text>
<text x="1500.9" y="768" text-anchor="middle" class="serif" font-size="12" fill="#111" stroke="#111" stroke-width="0.22">Feb 17</text>
<text x="1582.9" y="768" text-anchor="middle" class="serif" font-size="12" fill="#111" stroke="#111" stroke-width="0.22">Mar 2</text>
<text x="1674.1" y="768" text-anchor="middle" class="serif" font-size="12" fill="#111" stroke="#111" stroke-width="0.22">Mar 16</text>
</g>
<g class="serif" font-size="12" fill="#111" stroke="#111" stroke-width="0.22">
<text x="1692.5" y="48.6">475-0</text>
<text x="1692.5" y="97.8">470-0</text>
<text x="1692.5" y="147">465-0</text>
<text x="1692.5" y="196.1">460-0</text>
<text x="1692.5" y="245.3">455-0</text>
<text x="1692.5" y="294.4">450-0</text>
<text x="1692.5" y="343.6">445-0</text>
<text x="1692.5" y="392.7">440-0</text>
<text x="1692" y="450.8">200K</text>
<text x="1692" y="502">0K</text>
<text x="1692.5" y="522">100.00</text>
<text x="1692.5" y="576.8">50.00</text>
<text x="1692.5" y="633">0.00</text>
<text x="1692.5" y="678.5">18.00</text>
<text x="1692.5" y="713.5">16.00</text>
<text x="1692.5" y="749">14.00</text>
</g>
<rect x="1681" y="98" width="42.5" height="20.5" fill="#000"/>
<text x="1691" y="111.8" class="serif" font-size="13" font-weight="bold" fill="#fff" textLength="28" lengthAdjust="spacingAndGlyphs" stroke="#fff" stroke-width="0.22">468-4</text>
<rect x="1681" y="414.9" width="41.7" height="16.3" fill="#1a5fd6"/>
<text x="1691" y="425.2" class="serif" font-size="12" font-weight="bold" fill="#fff" stroke="#fff" stroke-width="0.22">301K</text>
<rect x="1681" y="474.4" width="35.5" height="20.6" fill="#ee4423"/>
<text x="1691" y="487.6" class="serif" font-size="12" font-weight="bold" fill="#fff" stroke="#fff" stroke-width="0.22">51K</text>
<rect x="1680.8" y="522.5" width="41.7" height="20" fill="#f08a48"/>
<text x="1691" y="535.5" class="serif" font-size="12" font-weight="bold" fill="#222" stroke="#222" stroke-width="0.22">86.50</text>
<rect x="1680.8" y="532.1" width="41.7" height="20.5" fill="#1ea63c"/>
<text x="1691" y="546" class="serif" font-size="12" font-weight="bold" fill="#fff" stroke="#fff" stroke-width="0.22">77.78</text>
<rect x="1680.8" y="643.8" width="41.7" height="18.4" fill="#fbbb6b"/>
<text x="1691.5" y="656" class="serif" font-size="12" font-weight="bold" fill="#111" stroke="#111" stroke-width="0.22">19.30</text>
<path d="M0,788.3 Q5.5,793 11.5,796 L0,796 Z" fill="#a9a9a9"/>
<path d="M0,788.3 Q5.5,793 11.5,796" fill="none" stroke="#3a3a3a" stroke-width="1.1"/>
<path d="M1735,788.3 Q1729.5,793 1723.5,796 L1735,796 Z" fill="#a9a9a9"/>
<path d="M1735,788.3 Q1729.5,793 1723.5,796" fill="none" stroke="#3a3a3a" stroke-width="1.1"/>
<text x="7.5" y="789.6" class="sans" font-size="9" fill="#111" stroke="#111" stroke-width="0.15" textLength="247.5" lengthAdjust="spacingAndGlyphs">Generated by cmdtyView, March 2nd 2026, 12:13:01 pm</text>
</svg></body></html>
